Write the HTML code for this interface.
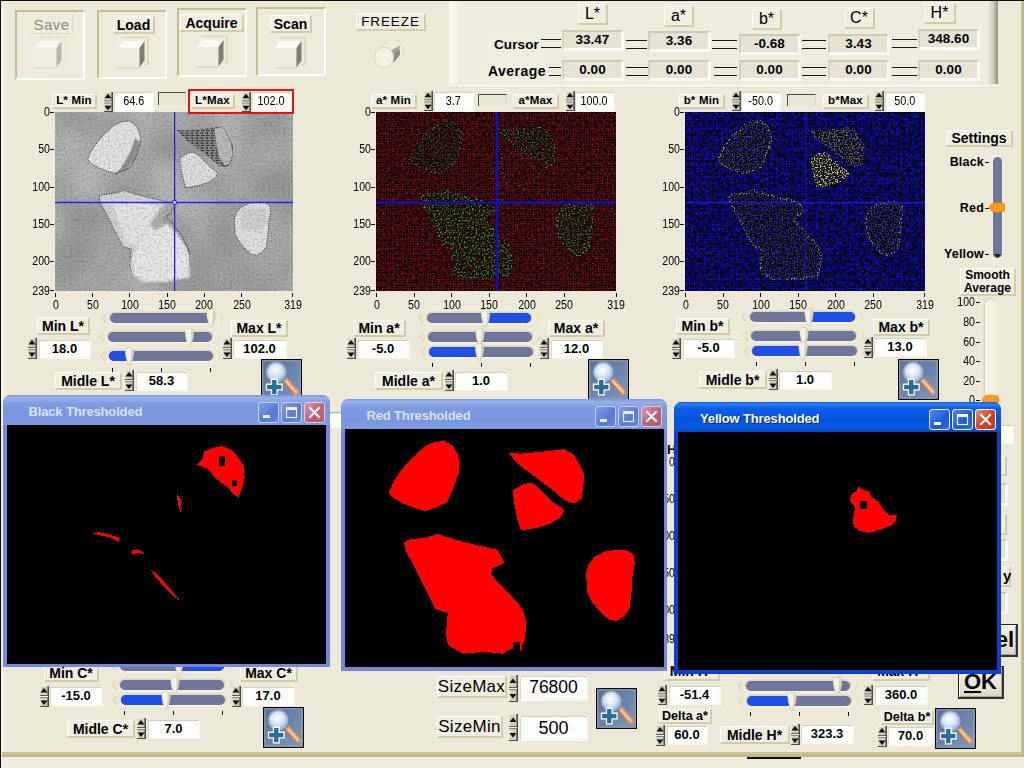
<!DOCTYPE html>
<html><head><meta charset="utf-8"><title>Threshold</title>
<style>
html,body{margin:0;padding:0;}
body{width:1024px;height:768px;overflow:hidden;background:#ECE9D8;font-family:"Liberation Sans",sans-serif;position:relative;color:#000;}
.abs{position:absolute;}
.lbl{position:absolute;box-sizing:border-box;background:#F0EEE0;border-top:1px solid #FCFBF4;border-left:1px solid #FCFBF4;border-bottom:2px solid #D3CCA8;border-right:2px solid #D3CCA8;display:flex;align-items:center;justify-content:center;white-space:nowrap;line-height:1;}
.fld{position:absolute;box-sizing:border-box;background:#FEFEFC;border-top:1px solid #D2CEB8;border-left:1px solid #DEDAC6;border-bottom:2px solid #FAF8EC;border-right:2px solid #FAF8EC;padding-bottom:1px;display:flex;align-items:center;justify-content:center;white-space:nowrap;line-height:1;}
.ind{position:absolute;box-sizing:border-box;background:#E6E3D5;border-top:2px solid #CFCAB2;border-left:2px solid #D6D2BC;border-bottom:3px solid #FCFBF3;border-right:3px solid #FCFBF3;display:flex;align-items:center;justify-content:center;white-space:nowrap;font-weight:bold;line-height:1;}
.spin{position:absolute;}
.frm{position:absolute;box-sizing:border-box;background:#EEEBDD;border-top:2px solid #C6BD91;border-left:2px solid #C6BD91;border-bottom:2px solid #FDFCF6;border-right:2px solid #FDFCF6;}
.ax{position:absolute;font-size:12px;line-height:12px;white-space:nowrap;color:#000;}
.tk{position:absolute;background:#111;}
.dl{position:absolute;height:1px;background:#1A1A1A;}
svg{display:block;}
</style></head><body>

<div class="abs" style="left:0;top:757px;width:1024px;height:11px;background:#EFECDE;"></div>
<div class="abs" style="left:1px;top:1px;width:5px;height:751px;background:#EFEDDF;"></div>
<div class="abs" style="left:2px;top:752px;width:1022px;height:5px;background:linear-gradient(to bottom,#CFC69C,#BFB482);"></div>
<div class="abs" style="left:1021px;top:1px;width:3px;height:756px;background:linear-gradient(to right,#CFC69C,#B9AE7C);"></div>
<div class="abs" style="left:0;top:0;width:1024px;height:1px;background:#111;"></div>
<div class="abs" style="left:0;top:0;width:1px;height:768px;background:#111;"></div>
<div class="abs" style="left:747px;top:757px;width:54px;height:2px;background:#111;"></div>
<div class="frm" style="left:15px;top:10px;width:70px;height:70px;"></div>
<div class="frm" style="left:97px;top:10px;width:70px;height:69px;"></div>
<div class="frm" style="left:177px;top:8px;width:70px;height:69px;"></div>
<div class="frm" style="left:256px;top:7px;width:70px;height:69px;"></div>
<div class="abs" style="left:31px;top:15px;width:42px;height:19px;box-sizing:border-box;border-bottom:1px dotted #CFC7A2;border-right:1px dotted #CFC7A2;display:flex;align-items:center;justify-content:center;font-size:15px;font-weight:normal;color:#8c8c86;letter-spacing:0.5px;line-height:1;">Save</div>
<div class="abs" style="left:34px;top:36px;width:34px;height:34px;"><svg width="34" height="34" viewBox="-1 -12 34 34"><path d="M5 -10.5 H30.5 V16" fill="none" stroke="#D9D4B8" stroke-width="1" stroke-dasharray="1 1"/><path d="M0 0 L5 -7 H26.5 L21.5 0 Z" fill="#F6F5EC"/><rect x="0" y="0" width="21.5" height="19.5" fill="#EFEDE0"/><path d="M21.5 0 L26.5 -7 V12.5 L21.5 19.5 Z" fill="#B9B7AA"/><path d="M0 19.8 H21.5" stroke="#CFCAB0" stroke-width="1" stroke-dasharray="1 1"/></svg></div>
<div class="lbl" style="left:113px;top:16px;width:42px;height:18px;font-size:14px;font-weight:bold;">Load</div>
<div class="abs" style="left:117px;top:36px;width:34px;height:34px;"><svg width="34" height="34" viewBox="-1 -12 34 34"><path d="M4.5 -10.5 H30 V16.5 H26" fill="none" stroke="#DDD8B8" stroke-width="1.6"/><path d="M0 0 L5 -7 H26.5 L21.5 0 Z" fill="#FBFAF3"/><rect x="0" y="0" width="21.5" height="19.5" fill="#EEECDD"/><path d="M21.5 0 L26.5 -7 V12.5 L21.5 19.5 Z" fill="#7E7D6F"/><path d="M0 20 H21.5" stroke="#D8D2B0" stroke-width="1.2"/></svg></div>
<div class="lbl" style="left:180px;top:14px;width:64px;height:18px;font-size:14px;font-weight:bold;">Acquire</div>
<div class="abs" style="left:196px;top:34.5px;width:34px;height:34px;"><svg width="34" height="34" viewBox="-1 -12 34 34"><path d="M4.5 -10.5 H30 V16.5 H26" fill="none" stroke="#DDD8B8" stroke-width="1.6"/><path d="M0 0 L5 -7 H26.5 L21.5 0 Z" fill="#FBFAF3"/><rect x="0" y="0" width="21.5" height="19.5" fill="#EEECDD"/><path d="M21.5 0 L26.5 -7 V12.5 L21.5 19.5 Z" fill="#7E7D6F"/><path d="M0 20 H21.5" stroke="#D8D2B0" stroke-width="1.2"/></svg></div>
<div class="lbl" style="left:270px;top:15px;width:42px;height:18px;font-size:14px;font-weight:bold;">Scan</div>
<div class="abs" style="left:274px;top:35.5px;width:34px;height:34px;"><svg width="34" height="34" viewBox="-1 -12 34 34"><path d="M4.5 -10.5 H30 V16.5 H26" fill="none" stroke="#DDD8B8" stroke-width="1.6"/><path d="M0 0 L5 -7 H26.5 L21.5 0 Z" fill="#FBFAF3"/><rect x="0" y="0" width="21.5" height="19.5" fill="#EEECDD"/><path d="M21.5 0 L26.5 -7 V12.5 L21.5 19.5 Z" fill="#7E7D6F"/><path d="M0 20 H21.5" stroke="#D8D2B0" stroke-width="1.2"/></svg></div>
<div class="lbl" style="left:356px;top:13px;width:70px;height:18px;font-size:13.5px;font-weight:normal;letter-spacing:0.9px;">FREEZE</div>
<div class="abs" style="left:370px;top:36px;width:40px;height:36px;"><svg width="40" height="36" viewBox="370 36 40 36"><ellipse cx="392.5" cy="50.5" rx="10.6" ry="11" fill="#F0EEE1" stroke="#DCD6B6" stroke-width="0.9"/><path d="M390.5 51 L399.5 45.5 L400 55 L393.5 62.5 Z" fill="#8E8D82"/><path d="M391 50 l8 -4 M391.5 52 l8 -5 M392 54 l8 -6" stroke="#d8d6ca" stroke-width="0.6"/><ellipse cx="384" cy="57.3" rx="9.6" ry="10.2" fill="#F2F0E3" stroke="#D6CFAC" stroke-width="0.9"/></svg></div>
<div class="abs" style="left:449px;top:1px;width:549px;height:87px;background:#EEECDD;"></div>
<div class="abs" style="left:449px;top:1px;width:11px;height:86px;background:linear-gradient(to right,#FBFAF2,#F6F4E8 60%,#EEECDD);"></div>
<div class="abs" style="left:987px;top:1px;width:11px;height:87px;background:linear-gradient(to right,#EEECDD,#D2CEBA 55%,#8F8C7A);"></div>
<div class="abs" style="left:449px;top:84px;width:549px;height:4px;background:linear-gradient(to bottom,#EEECDD,#F8F7EE 50%,#DAD6C4);"></div>
<div class="abs" style="left:460px;top:84px;width:530px;height:3px;background:linear-gradient(to bottom,#F1EFE2,#FAF9F1);"></div>
<div class="lbl" style="left:578px;top:4px;width:30px;height:21px;font-size:16px;font-weight:normal;">L*</div>
<div class="lbl" style="left:664px;top:6px;width:30px;height:21px;font-size:16px;font-weight:normal;">a*</div>
<div class="lbl" style="left:752px;top:9px;width:30px;height:21px;font-size:16px;font-weight:normal;">b*</div>
<div class="lbl" style="left:844px;top:8px;width:31px;height:21px;font-size:16px;font-weight:normal;">C*</div>
<div class="lbl" style="left:924px;top:3px;width:32px;height:21px;font-size:16px;font-weight:normal;">H*</div>
<div class="abs" style="left:488px;top:33px;width:52px;height:20px;background:#EFEDDF;"></div>
<div class="abs" style="left:494px;top:36.5px;font-size:13.5px;font-weight:bold;line-height:16px;letter-spacing:0.1px;">Cursor</div>
<div class="abs" style="left:486px;top:61px;width:62px;height:20px;background:#EFEDDF;"></div>
<div class="abs" style="left:488px;top:63px;font-size:14px;font-weight:bold;line-height:16px;letter-spacing:0.45px;">Average</div>
<div class="ind" style="left:562px;top:29.5px;width:62px;height:21px;font-size:13.5px;">33.47</div>
<div class="ind" style="left:562px;top:60px;width:62px;height:21px;font-size:13.5px;">0.00</div>
<div class="ind" style="left:648px;top:31px;width:63px;height:21px;font-size:13.5px;">3.36</div>
<div class="ind" style="left:648px;top:60px;width:63px;height:21px;font-size:13.5px;">0.00</div>
<div class="ind" style="left:739px;top:33.5px;width:62px;height:21px;font-size:13.5px;">-0.68</div>
<div class="ind" style="left:739px;top:60px;width:62px;height:21px;font-size:13.5px;">0.00</div>
<div class="ind" style="left:828px;top:33.5px;width:62px;height:21px;font-size:13.5px;">3.43</div>
<div class="ind" style="left:828px;top:60px;width:62px;height:21px;font-size:13.5px;">0.00</div>
<div class="ind" style="left:918px;top:28.5px;width:62px;height:21px;font-size:13.5px;">348.60</div>
<div class="ind" style="left:918px;top:60px;width:62px;height:21px;font-size:13.5px;">0.00</div>
<div class="dl" style="left:541px;top:39px;width:20px;"></div>
<div class="dl" style="left:541px;top:47px;width:20px;"></div>
<div class="dl" style="left:549px;top:67px;width:12px;"></div>
<div class="dl" style="left:549px;top:75px;width:12px;"></div>
<div class="dl" style="left:626px;top:40px;width:21px;"></div>
<div class="dl" style="left:626px;top:48px;width:21px;"></div>
<div class="dl" style="left:626px;top:67px;width:22px;"></div>
<div class="dl" style="left:626px;top:75px;width:22px;"></div>
<div class="dl" style="left:712px;top:40px;width:25px;"></div>
<div class="dl" style="left:712px;top:48px;width:25px;"></div>
<div class="dl" style="left:714px;top:67px;width:23px;"></div>
<div class="dl" style="left:714px;top:75px;width:23px;"></div>
<div class="dl" style="left:802px;top:40px;width:24px;"></div>
<div class="dl" style="left:802px;top:48px;width:24px;"></div>
<div class="dl" style="left:802px;top:67px;width:24px;"></div>
<div class="dl" style="left:802px;top:75px;width:24px;"></div>
<div class="dl" style="left:892px;top:39px;width:25px;"></div>
<div class="dl" style="left:892px;top:47px;width:25px;"></div>
<div class="dl" style="left:892px;top:67px;width:25px;"></div>
<div class="dl" style="left:892px;top:75px;width:25px;"></div>
<div class="abs" style="left:55px;top:112px;width:238px;height:179px;overflow:hidden;background:#ADADAD;"><svg width="238" height="179" viewBox="0 0 238 179"><defs>
<filter id="fL1" x="0" y="0" width="100%" height="100%" color-interpolation-filters="sRGB"><feTurbulence type="fractalNoise" baseFrequency="0.016" numOctaves="2" seed="7"/><feColorMatrix type="matrix" values="0 0 0 0 0.42  0 0 0 0 0.42  0 0 0 0 0.42  1.2 0 0 0 -0.42"/></filter>
<filter id="fL2" x="0" y="0" width="100%" height="100%" color-interpolation-filters="sRGB"><feTurbulence type="fractalNoise" baseFrequency="0.45" numOctaves="1" seed="11"/><feColorMatrix type="matrix" values="0 0 0 0 0.2  0 0 0 0 0.2  0 0 0 0 0.2  1.6 0 0 0 -0.66"/></filter>
<filter id="fL3" x="-5%" y="-5%" width="110%" height="110%"><feGaussianBlur stdDeviation="1.2"/></filter>
<pattern id="gridL" width="2.5" height="2.5" patternUnits="userSpaceOnUse"><path d="M0 0.5 H2.5 M0.5 0 V2.5" stroke="#fff" stroke-opacity="0.10" stroke-width="1"/></pattern>
<pattern id="hatchL" width="5" height="5" patternUnits="userSpaceOnUse"><path d="M0 1 H3 M1 3.5 H4.5 M2.5 0 V2" stroke="#111" stroke-opacity="0.8" stroke-width="1.1"/></pattern>
<linearGradient id="gL" x1="0" y1="0" x2="0.6" y2="1"><stop offset="0" stop-color="#B5B5B5"/><stop offset="0.5" stop-color="#B0B0B0"/><stop offset="1" stop-color="#A6A6A6"/></linearGradient>
</defs><rect width="238" height="179" fill="url(#gL)"/><rect width="238" height="179" filter="url(#fL1)"/><g filter="url(#fL3)"><polygon points="30,175 60,130 95,95 120,100 150,135 160,179 110,179 80,150 50,179" fill="#8F8F8F" opacity="0.35"/><polygon points="150,120 238,110 238,179 170,179" fill="#909090" opacity="0.22"/></g><polygon points="77.4,22.4 86.3,29.8 81.1,46.2 75.1,56.7 61.0,62.6 58.0,59.7" fill="#6E6E6E" opacity="0.9"/><polygon points="32.6,47.5 36.6,38.6 42.0,30.5 50.1,21.6 59.5,13.0 66.7,9.7 74.3,8.9 80.2,13.0 83.7,18.4 85.3,25.1 84.5,33.2 80.2,44.8 75.6,54.8 66.7,58.8 59.5,61.3 51.4,58.8 43.3,55.6 36.1,51.5" fill="#E1E1E1" stroke="#262626" stroke-width="1" stroke-dasharray="1.3 1.2" stroke-opacity="0.9"/><polygon points="80.3,25.4 84.8,31.3 79.6,45.5 74.4,54.4 62.5,60.4 68.4,52.2 75.9,38.8" fill="#7A7A7A" opacity="0.85"/><polygon points="121.4,17.8 130.8,18.4 142.9,17.3 153.7,16.2 163.1,15.1 169.8,18.9 173.9,25.9 178.2,34.0 177.1,42.6 176.0,52.1 169.8,55.6 163.1,52.9 155.0,45.9 142.9,36.7 130.8,27.8" fill="#828282"/><polygon points="121.4,17.8 130.8,18.4 142.9,17.3 153.7,16.2 163.1,15.1 169.8,18.9 173.9,25.9 178.2,34.0 177.1,42.6 176.0,52.1 169.8,55.6 163.1,52.9 155.0,45.9 142.9,36.7 130.8,27.8" fill="url(#hatchL)"/><polygon points="159.2,16.4 168.1,14.9 176.3,31.3 177.8,41.8 174.8,52.2 169.6,53.7 163.6,44.8 160.7,29.8" fill="#B4B4B4" stroke="#333" stroke-width="0.8" stroke-dasharray="1.2 1.4"/><polygon points="124.9,45.9 132.1,41.6 137.5,39.9 142.9,42.6 148.3,48.0 155.0,54.8 163.1,60.5 160.4,65.6 153.7,70.2 142.9,73.7 130.8,75.6 128.1,66.9 125.9,56.1" fill="#DADADA" stroke="#262626" stroke-width="1" stroke-dasharray="1.3 1.2" stroke-opacity="0.9"/><polygon points="179.2,107.4 181.4,100.7 186.0,95.3 194.0,91.2 202.1,90.1 210.2,90.7 214.8,93.9 215.6,100.7 213.7,110.1 213.1,120.9 211.5,134.4 207.5,139.8 202.1,143.0 196.7,142.5 190.5,137.1 184.6,130.3 180.3,122.3" fill="#DDDDDD" stroke="#262626" stroke-width="1" stroke-dasharray="1.3 1.2" stroke-opacity="0.9"/><polygon points="184.5,100.7 194.9,95.5 209.7,97.0 213.5,111.9 200.8,119.3 187.4,117.8" fill="#C6C6C6" opacity="0.7" filter="url(#fL3)"/><polygon points="44.1,84.5 47.4,82.6 60.8,81.0 68.9,78.3 77.0,81.0 89.1,84.5 103.9,88.0 113.3,90.1 118.7,99.9 109.3,104.2 108.7,108.8 114.6,115.5 124.1,125.0 132.1,134.4 134.8,143.8 134.0,154.6 130.8,165.4 122.7,164.1 117.3,167.6 103.9,166.2 87.7,167.6 77.0,161.4 74.8,153.3 76.4,137.1 67.5,134.4 63.5,126.3 56.8,112.8 50.1,99.3 45.2,91.2" fill="#CFCFCF" stroke="#262626" stroke-width="1" stroke-dasharray="1.3 1.2" stroke-opacity="0.9"/><polygon points="58.0,91.0 87.8,89.5 104.1,95.5 95.2,111.9 80.3,132.8 72.9,131.3 64.0,111.9" fill="#E4E4E4" filter="url(#fL3)"/><polygon points="83.3,131.3 95.2,113.4 111.6,110.4 125.0,125.3 133.9,145.4 134.6,165.6 125.0,167.1 111.6,170.1 87.8,170.1 77.4,162.6 78.8,143.2" fill="#E6E6E6" filter="url(#fL3)"/><polygon points="95.2,111.9 111.6,89.5 120.5,95.5 113.0,104.4 111.6,111.9 100.4,119.3" fill="#9A9A9A" opacity="0.75" filter="url(#fL3)"/><polyline points="119.0,95.5 111.6,104.4 119.0,113.4 127.9,125.3 135.4,141.7" fill="none" stroke="#262626" stroke-width="1" stroke-dasharray="1.3 1.2"/><rect width="238" height="179" filter="url(#fL2)" opacity="0.35"/><rect width="238" height="179" fill="url(#gridL)"/><rect x="119" y="0" width="1.3" height="179" fill="#1E22F0"/><rect x="0" y="89.8" width="238" height="1.4" fill="#1E22F0"/><circle cx="119.6" cy="90.5" r="2.3" fill="#B8B8D8" stroke="#1E22F0" stroke-width="1"/></svg></div>
<div class="ax" style="left:10px;top:106.0px;width:40px;text-align:right;transform:scaleX(0.88);transform-origin:right center;">0</div>
<div class="tk" style="left:50px;top:112px;width:4px;height:1px;"></div>
<div class="ax" style="left:10px;top:143.3px;width:40px;text-align:right;transform:scaleX(0.88);transform-origin:right center;">50</div>
<div class="tk" style="left:50px;top:149px;width:4px;height:1px;"></div>
<div class="ax" style="left:10px;top:180.7px;width:40px;text-align:right;transform:scaleX(0.88);transform-origin:right center;">100</div>
<div class="tk" style="left:50px;top:187px;width:4px;height:1px;"></div>
<div class="ax" style="left:10px;top:218.0px;width:40px;text-align:right;transform:scaleX(0.88);transform-origin:right center;">150</div>
<div class="tk" style="left:50px;top:224px;width:4px;height:1px;"></div>
<div class="ax" style="left:10px;top:255.4px;width:40px;text-align:right;transform:scaleX(0.88);transform-origin:right center;">200</div>
<div class="tk" style="left:50px;top:261px;width:4px;height:1px;"></div>
<div class="ax" style="left:10px;top:284.5px;width:40px;text-align:right;transform:scaleX(0.88);transform-origin:right center;">239</div>
<div class="tk" style="left:50px;top:290px;width:4px;height:1px;"></div>
<div class="ax" style="left:35.5px;top:299px;width:40px;text-align:center;transform:scaleX(0.88);">0</div>
<div class="tk" style="left:55px;top:293px;width:1px;height:4px;"></div>
<div class="ax" style="left:72.7px;top:299px;width:40px;text-align:center;transform:scaleX(0.88);">50</div>
<div class="tk" style="left:92px;top:293px;width:1px;height:4px;"></div>
<div class="ax" style="left:110.0px;top:299px;width:40px;text-align:center;transform:scaleX(0.88);">100</div>
<div class="tk" style="left:129px;top:293px;width:1px;height:4px;"></div>
<div class="ax" style="left:147.2px;top:299px;width:40px;text-align:center;transform:scaleX(0.88);">150</div>
<div class="tk" style="left:167px;top:293px;width:1px;height:4px;"></div>
<div class="ax" style="left:184.4px;top:299px;width:40px;text-align:center;transform:scaleX(0.88);">200</div>
<div class="tk" style="left:204px;top:293px;width:1px;height:4px;"></div>
<div class="ax" style="left:221.6px;top:299px;width:40px;text-align:center;transform:scaleX(0.88);">250</div>
<div class="tk" style="left:241px;top:293px;width:1px;height:4px;"></div>
<div class="ax" style="left:273.0px;top:299px;width:40px;text-align:center;transform:scaleX(0.88);">319</div>
<div class="tk" style="left:292px;top:293px;width:1px;height:4px;"></div>
<div class="abs" style="left:376px;top:112px;width:240px;height:179px;overflow:hidden;background:#4A0A0C;"><svg width="240" height="179" viewBox="0 0 240 179"><defs>
<filter id="fA1" x="0" y="0" width="100%" height="100%" color-interpolation-filters="sRGB"><feTurbulence type="fractalNoise" baseFrequency="0.4" numOctaves="2" seed="5"/><feColorMatrix type="matrix" values="1.7 0 0 0 -0.53  0 0 0 0 0.035  0 0 0 0 0.05  0 0 0 0 1"/></filter>
<filter id="fA2" x="0" y="0" width="100%" height="100%" color-interpolation-filters="sRGB"><feTurbulence type="fractalNoise" baseFrequency="0.6" numOctaves="1" seed="21" result="n"/><feColorMatrix in="n" type="matrix" values="0 0 0 0 0.12  0 0 0 0 0.78  0 0 0 0 0.14  0 6 0 0 -3.1" result="g"/><feComposite in="g" in2="SourceAlpha" operator="in"/></filter>
<filter id="fA3" x="0" y="0" width="100%" height="100%" color-interpolation-filters="sRGB"><feGaussianBlur stdDeviation="2.5"/></filter>
<pattern id="gridA" width="5" height="5" patternUnits="userSpaceOnUse"><path d="M0 0.5 H5 M0 3.5 H5 M0.5 0 V5 M3.5 0 V5" stroke="#000" stroke-opacity="0.55" stroke-width="1" shape-rendering="crispEdges"/></pattern>
</defs><rect width="240" height="179" filter="url(#fA1)"/><g filter="url(#fA3)" opacity="0.4"><polygon points="32.8,47.5 36.9,38.6 42.3,30.5 50.5,21.6 60.0,13.0 67.3,9.7 74.9,8.9 80.9,13.0 84.4,18.4 86.0,25.1 85.2,33.2 80.9,44.8 76.3,54.8 67.3,58.8 60.0,61.3 51.8,58.8 43.7,55.6 36.4,51.5" fill="#0c0703"/><polygon points="122.4,17.8 131.9,18.4 144.1,17.3 155.0,16.2 164.5,15.1 171.2,18.9 175.3,25.9 179.7,34.0 178.6,42.6 177.5,52.1 171.2,55.6 164.5,52.9 156.3,45.9 144.1,36.7 131.9,27.8" fill="#0c0703"/><polygon points="180.7,107.4 182.9,100.7 187.5,95.3 195.7,91.2 203.8,90.1 211.9,90.7 216.6,93.9 217.4,100.7 215.5,110.1 214.9,120.9 213.3,134.4 209.2,139.8 203.8,143.0 198.4,142.5 192.1,137.1 186.2,130.3 181.8,122.3" fill="#0c0703"/><polygon points="44.5,84.5 47.8,82.6 61.3,81.0 69.5,78.3 77.6,81.0 89.8,84.5 104.8,88.0 114.3,90.1 119.7,99.9 110.2,104.2 109.6,108.8 115.6,115.5 125.1,125.0 133.2,134.4 136.0,143.8 135.1,154.6 131.9,165.4 123.8,164.1 118.3,167.6 104.8,166.2 88.5,167.6 77.6,161.4 75.4,153.3 77.1,137.1 68.1,134.4 64.0,126.3 57.3,112.8 50.5,99.3 45.6,91.2" fill="#0c0703"/></g><rect width="240" height="179" fill="url(#gridA)"/><g filter="url(#fA2)"><polygon points="32.8,47.5 36.9,38.6 42.3,30.5 50.5,21.6 60.0,13.0 67.3,9.7 74.9,8.9 80.9,13.0 84.4,18.4 86.0,25.1 85.2,33.2 80.9,44.8 76.3,54.8 67.3,58.8 60.0,61.3 51.8,58.8 43.7,55.6 36.4,51.5" fill="#fff" fill-opacity="0.4" stroke="#fff" stroke-width="2.5" stroke-opacity="0.6"/><polygon points="122.4,17.8 131.9,18.4 144.1,17.3 155.0,16.2 164.5,15.1 171.2,18.9 175.3,25.9 179.7,34.0 178.6,42.6 177.5,52.1 171.2,55.6 164.5,52.9 156.3,45.9 144.1,36.7 131.9,27.8" fill="#fff" fill-opacity="0.5" stroke="#fff" stroke-width="2" stroke-opacity="0.6"/><polygon points="180.7,107.4 182.9,100.7 187.5,95.3 195.7,91.2 203.8,90.1 211.9,90.7 216.6,93.9 217.4,100.7 215.5,110.1 214.9,120.9 213.3,134.4 209.2,139.8 203.8,143.0 198.4,142.5 192.1,137.1 186.2,130.3 181.8,122.3" fill="#fff" fill-opacity="0.6" stroke="#fff" stroke-width="2.5" stroke-opacity="0.8"/><polygon points="44.5,84.5 47.8,82.6 61.3,81.0 69.5,78.3 77.6,81.0 89.8,84.5 104.8,88.0 114.3,90.1 119.7,99.9 110.2,104.2 109.6,108.8 115.6,115.5 125.1,125.0 133.2,134.4 136.0,143.8 135.1,154.6 131.9,165.4 123.8,164.1 118.3,167.6 104.8,166.2 88.5,167.6 77.6,161.4 75.4,153.3 77.1,137.1 68.1,134.4 64.0,126.3 57.3,112.8 50.5,99.3 45.6,91.2" fill="#fff" fill-opacity="0.72" stroke="#fff" stroke-width="2" stroke-opacity="0.7"/><polygon points="125.9,45.9 133.2,41.6 138.7,39.9 144.1,42.6 149.5,48.0 156.3,54.8 164.5,60.5 161.7,65.6 155.0,70.2 144.1,73.7 131.9,75.6 129.2,66.9 127.0,56.1" fill="none" stroke="#fff" stroke-width="2" opacity="0.5"/></g><rect x="119.8" y="0" width="2.4" height="179" fill="#0C10C4"/><rect x="0" y="89.4" width="240" height="2.2" fill="#0C10C4"/></svg></div>
<div class="ax" style="left:331px;top:106.0px;width:40px;text-align:right;transform:scaleX(0.88);transform-origin:right center;">0</div>
<div class="tk" style="left:371px;top:112px;width:4px;height:1px;"></div>
<div class="ax" style="left:331px;top:143.3px;width:40px;text-align:right;transform:scaleX(0.88);transform-origin:right center;">50</div>
<div class="tk" style="left:371px;top:149px;width:4px;height:1px;"></div>
<div class="ax" style="left:331px;top:180.7px;width:40px;text-align:right;transform:scaleX(0.88);transform-origin:right center;">100</div>
<div class="tk" style="left:371px;top:187px;width:4px;height:1px;"></div>
<div class="ax" style="left:331px;top:218.0px;width:40px;text-align:right;transform:scaleX(0.88);transform-origin:right center;">150</div>
<div class="tk" style="left:371px;top:224px;width:4px;height:1px;"></div>
<div class="ax" style="left:331px;top:255.4px;width:40px;text-align:right;transform:scaleX(0.88);transform-origin:right center;">200</div>
<div class="tk" style="left:371px;top:261px;width:4px;height:1px;"></div>
<div class="ax" style="left:331px;top:284.5px;width:40px;text-align:right;transform:scaleX(0.88);transform-origin:right center;">239</div>
<div class="tk" style="left:371px;top:290px;width:4px;height:1px;"></div>
<div class="ax" style="left:356.5px;top:299px;width:40px;text-align:center;transform:scaleX(0.88);">0</div>
<div class="tk" style="left:376px;top:293px;width:1px;height:4px;"></div>
<div class="ax" style="left:394.0px;top:299px;width:40px;text-align:center;transform:scaleX(0.88);">50</div>
<div class="tk" style="left:414px;top:293px;width:1px;height:4px;"></div>
<div class="ax" style="left:431.6px;top:299px;width:40px;text-align:center;transform:scaleX(0.88);">100</div>
<div class="tk" style="left:451px;top:293px;width:1px;height:4px;"></div>
<div class="ax" style="left:469.1px;top:299px;width:40px;text-align:center;transform:scaleX(0.88);">150</div>
<div class="tk" style="left:489px;top:293px;width:1px;height:4px;"></div>
<div class="ax" style="left:506.7px;top:299px;width:40px;text-align:center;transform:scaleX(0.88);">200</div>
<div class="tk" style="left:526px;top:293px;width:1px;height:4px;"></div>
<div class="ax" style="left:544.2px;top:299px;width:40px;text-align:center;transform:scaleX(0.88);">250</div>
<div class="tk" style="left:564px;top:293px;width:1px;height:4px;"></div>
<div class="ax" style="left:596.0px;top:299px;width:40px;text-align:center;transform:scaleX(0.88);">319</div>
<div class="tk" style="left:616px;top:293px;width:1px;height:4px;"></div>
<div class="abs" style="left:685px;top:112px;width:240px;height:179px;overflow:hidden;background:#0A0A5A;"><svg width="240" height="179" viewBox="0 0 240 179"><defs>
<filter id="fB1" x="0" y="0" width="100%" height="100%" color-interpolation-filters="sRGB"><feTurbulence type="fractalNoise" baseFrequency="0.33" numOctaves="2" seed="9"/><feColorMatrix type="matrix" values="0 0 0 0 0.045  0 0 0 0 0.045  0 0 2.8 0 -0.9  0 0 0 0 1"/></filter>
<filter id="fB2" x="0" y="0" width="100%" height="100%" color-interpolation-filters="sRGB"><feTurbulence type="fractalNoise" baseFrequency="0.65" numOctaves="1" seed="33" result="n"/><feColorMatrix in="n" type="matrix" values="0 0 0 0 0.85  0 0 0 0 0.85  0 0 0 0 0.08  0 6 0 0 -2.9" result="g"/><feComposite in="g" in2="SourceAlpha" operator="in"/></filter>
<filter id="fB3" x="0" y="0" width="100%" height="100%" color-interpolation-filters="sRGB"><feGaussianBlur stdDeviation="2.5"/></filter>
<pattern id="gridB" width="5" height="5" patternUnits="userSpaceOnUse"><path d="M0 0.5 H5 M0 3.5 H5 M0.5 0 V5 M3.5 0 V5" stroke="#000" stroke-opacity="0.55" stroke-width="1" shape-rendering="crispEdges"/></pattern>
</defs><rect width="240" height="179" filter="url(#fB1)"/><g filter="url(#fB3)" opacity="0.3"><polygon points="32.8,47.5 36.9,38.6 42.3,30.5 50.5,21.6 60.0,13.0 67.3,9.7 74.9,8.9 80.9,13.0 84.4,18.4 86.0,25.1 85.2,33.2 80.9,44.8 76.3,54.8 67.3,58.8 60.0,61.3 51.8,58.8 43.7,55.6 36.4,51.5" fill="#06060a"/><polygon points="122.4,17.8 131.9,18.4 144.1,17.3 155.0,16.2 164.5,15.1 171.2,18.9 175.3,25.9 179.7,34.0 178.6,42.6 177.5,52.1 171.2,55.6 164.5,52.9 156.3,45.9 144.1,36.7 131.9,27.8" fill="#06060a"/><polygon points="125.9,45.9 133.2,41.6 138.7,39.9 144.1,42.6 149.5,48.0 156.3,54.8 164.5,60.5 161.7,65.6 155.0,70.2 144.1,73.7 131.9,75.6 129.2,66.9 127.0,56.1" fill="#06060a"/><polygon points="180.7,107.4 182.9,100.7 187.5,95.3 195.7,91.2 203.8,90.1 211.9,90.7 216.6,93.9 217.4,100.7 215.5,110.1 214.9,120.9 213.3,134.4 209.2,139.8 203.8,143.0 198.4,142.5 192.1,137.1 186.2,130.3 181.8,122.3" fill="#06060a"/><polygon points="44.5,84.5 47.8,82.6 61.3,81.0 69.5,78.3 77.6,81.0 89.8,84.5 104.8,88.0 114.3,90.1 119.7,99.9 110.2,104.2 109.6,108.8 115.6,115.5 125.1,125.0 133.2,134.4 136.0,143.8 135.1,154.6 131.9,165.4 123.8,164.1 118.3,167.6 104.8,166.2 88.5,167.6 77.6,161.4 75.4,153.3 77.1,137.1 68.1,134.4 64.0,126.3 57.3,112.8 50.5,99.3 45.6,91.2" fill="#06060a"/></g><rect width="240" height="179" fill="url(#gridB)"/><g filter="url(#fB2)"><polygon points="32.8,47.5 36.9,38.6 42.3,30.5 50.5,21.6 60.0,13.0 67.3,9.7 74.9,8.9 80.9,13.0 84.4,18.4 86.0,25.1 85.2,33.2 80.9,44.8 76.3,54.8 67.3,58.8 60.0,61.3 51.8,58.8 43.7,55.6 36.4,51.5" fill="#fff" fill-opacity="0.28" stroke="#fff" stroke-width="2.5" stroke-opacity="0.6"/><polygon points="122.4,17.8 131.9,18.4 144.1,17.3 155.0,16.2 164.5,15.1 171.2,18.9 175.3,25.9 179.7,34.0 178.6,42.6 177.5,52.1 171.2,55.6 164.5,52.9 156.3,45.9 144.1,36.7 131.9,27.8" fill="#fff" fill-opacity="0.5"/><polygon points="125.9,45.9 133.2,41.6 138.7,39.9 144.1,42.6 149.5,48.0 156.3,54.8 164.5,60.5 161.7,65.6 155.0,70.2 144.1,73.7 131.9,75.6 129.2,66.9 127.0,56.1" fill="#fff" opacity="1"/><polygon points="125.9,45.9 133.2,41.6 138.7,39.9 144.1,42.6 149.5,48.0 156.3,54.8 164.5,60.5 161.7,65.6 155.0,70.2 144.1,73.7 131.9,75.6 129.2,66.9 127.0,56.1" fill="#fff" opacity="1"/><polygon points="180.7,107.4 182.9,100.7 187.5,95.3 195.7,91.2 203.8,90.1 211.9,90.7 216.6,93.9 217.4,100.7 215.5,110.1 214.9,120.9 213.3,134.4 209.2,139.8 203.8,143.0 198.4,142.5 192.1,137.1 186.2,130.3 181.8,122.3" fill="#fff" fill-opacity="0.25" stroke="#fff" stroke-width="2.5" stroke-opacity="0.55"/><polygon points="44.5,84.5 47.8,82.6 61.3,81.0 69.5,78.3 77.6,81.0 89.8,84.5 104.8,88.0 114.3,90.1 119.7,99.9 110.2,104.2 109.6,108.8 115.6,115.5 125.1,125.0 133.2,134.4 136.0,143.8 135.1,154.6 131.9,165.4 123.8,164.1 118.3,167.6 104.8,166.2 88.5,167.6 77.6,161.4 75.4,153.3 77.1,137.1 68.1,134.4 64.0,126.3 57.3,112.8 50.5,99.3 45.6,91.2" fill="#fff" fill-opacity="0.22" stroke="#fff" stroke-width="2.5" stroke-opacity="0.55"/></g><rect x="120" y="0" width="1" height="179" fill="#1A1AC8" opacity="0.6"/><rect x="0" y="90" width="240" height="1.4" fill="#1C1CE0" opacity="0.8"/></svg></div>
<div class="ax" style="left:640px;top:106.0px;width:40px;text-align:right;transform:scaleX(0.88);transform-origin:right center;">0</div>
<div class="tk" style="left:680px;top:112px;width:4px;height:1px;"></div>
<div class="ax" style="left:640px;top:143.3px;width:40px;text-align:right;transform:scaleX(0.88);transform-origin:right center;">50</div>
<div class="tk" style="left:680px;top:149px;width:4px;height:1px;"></div>
<div class="ax" style="left:640px;top:180.7px;width:40px;text-align:right;transform:scaleX(0.88);transform-origin:right center;">100</div>
<div class="tk" style="left:680px;top:187px;width:4px;height:1px;"></div>
<div class="ax" style="left:640px;top:218.0px;width:40px;text-align:right;transform:scaleX(0.88);transform-origin:right center;">150</div>
<div class="tk" style="left:680px;top:224px;width:4px;height:1px;"></div>
<div class="ax" style="left:640px;top:255.4px;width:40px;text-align:right;transform:scaleX(0.88);transform-origin:right center;">200</div>
<div class="tk" style="left:680px;top:261px;width:4px;height:1px;"></div>
<div class="ax" style="left:640px;top:284.5px;width:40px;text-align:right;transform:scaleX(0.88);transform-origin:right center;">239</div>
<div class="tk" style="left:680px;top:290px;width:4px;height:1px;"></div>
<div class="ax" style="left:665.5px;top:299px;width:40px;text-align:center;transform:scaleX(0.88);">0</div>
<div class="tk" style="left:685px;top:293px;width:1px;height:4px;"></div>
<div class="ax" style="left:703.0px;top:299px;width:40px;text-align:center;transform:scaleX(0.88);">50</div>
<div class="tk" style="left:723px;top:293px;width:1px;height:4px;"></div>
<div class="ax" style="left:740.6px;top:299px;width:40px;text-align:center;transform:scaleX(0.88);">100</div>
<div class="tk" style="left:760px;top:293px;width:1px;height:4px;"></div>
<div class="ax" style="left:778.1px;top:299px;width:40px;text-align:center;transform:scaleX(0.88);">150</div>
<div class="tk" style="left:798px;top:293px;width:1px;height:4px;"></div>
<div class="ax" style="left:815.7px;top:299px;width:40px;text-align:center;transform:scaleX(0.88);">200</div>
<div class="tk" style="left:835px;top:293px;width:1px;height:4px;"></div>
<div class="ax" style="left:853.2px;top:299px;width:40px;text-align:center;transform:scaleX(0.88);">250</div>
<div class="tk" style="left:873px;top:293px;width:1px;height:4px;"></div>
<div class="ax" style="left:905.0px;top:299px;width:40px;text-align:center;transform:scaleX(0.88);">319</div>
<div class="tk" style="left:924px;top:293px;width:1px;height:4px;"></div>
<div class="lbl" style="left:52px;top:94px;width:45px;height:15px;font-size:11.5px;font-weight:bold;letter-spacing:0.2px;">L* Min</div>
<div class="spin" style="left:104px;top:92px;width:9px;height:20px;"><svg width="9" height="20" viewBox="0 0 9 20"><rect x="0" y="0" width="9" height="20" fill="#D3CFBD"/><rect x="0" y="0" width="9" height="1" fill="#E9E6D6"/><rect x="0" y="0" width="1" height="20" fill="#E9E6D6"/><rect x="7.4" y="0" width="1.6" height="20" fill="#4E4E44"/><rect x="0" y="19" width="9" height="1" fill="#4E4E44"/><rect x="0" y="8.5" width="8" height="1" fill="#5E5E52"/><rect x="0" y="9.5" width="8" height="1" fill="#F0EEE0"/><rect x="0" y="10.5" width="8" height="1" fill="#8A8878"/><path d="M4.0 1.7999999999999998 L7.6 6.2 L0.3999999999999999 6.2 Z" fill="#111"/><path d="M4.0 18.2 L7.6 13.8 L0.3999999999999999 13.8 Z" fill="#111"/></svg></div>
<div class="fld" style="left:114px;top:92px;width:40px;height:20px;font-size:12px;font-weight:normal;"><span style="display:inline-block;transform:scaleX(0.9);">64.6</span></div>
<div class="abs" style="left:158px;top:92px;width:28px;height:13px;box-sizing:border-box;background:#E9E6D6;border-top:1px solid #4A4A40;border-left:1px solid #4A4A40;border-right:1px solid #D9D5BF;"></div>
<div class="abs" style="left:188px;top:89px;width:106px;height:25px;box-sizing:border-box;border:2px solid #D81818;"></div>
<div class="lbl" style="left:191px;top:94px;width:44px;height:15px;font-size:11.5px;font-weight:bold;letter-spacing:0.2px;">L*Max</div>
<div class="spin" style="left:242px;top:92px;width:9px;height:20px;"><svg width="9" height="20" viewBox="0 0 9 20"><rect x="0" y="0" width="9" height="20" fill="#D3CFBD"/><rect x="0" y="0" width="9" height="1" fill="#E9E6D6"/><rect x="0" y="0" width="1" height="20" fill="#E9E6D6"/><rect x="7.4" y="0" width="1.6" height="20" fill="#4E4E44"/><rect x="0" y="19" width="9" height="1" fill="#4E4E44"/><rect x="0" y="8.5" width="8" height="1" fill="#5E5E52"/><rect x="0" y="9.5" width="8" height="1" fill="#F0EEE0"/><rect x="0" y="10.5" width="8" height="1" fill="#8A8878"/><path d="M4.0 1.7999999999999998 L7.6 6.2 L0.3999999999999999 6.2 Z" fill="#111"/><path d="M4.0 18.2 L7.6 13.8 L0.3999999999999999 13.8 Z" fill="#111"/></svg></div>
<div class="fld" style="left:252px;top:92px;width:40px;height:20px;font-size:12px;font-weight:normal;"><span style="display:inline-block;transform:scaleX(0.9);">102.0</span></div>
<div class="lbl" style="left:371px;top:94px;width:46px;height:15px;font-size:11.5px;font-weight:bold;letter-spacing:0.2px;">a* Min</div>
<div class="spin" style="left:424px;top:91px;width:9px;height:20px;"><svg width="9" height="20" viewBox="0 0 9 20"><rect x="0" y="0" width="9" height="20" fill="#D3CFBD"/><rect x="0" y="0" width="9" height="1" fill="#E9E6D6"/><rect x="0" y="0" width="1" height="20" fill="#E9E6D6"/><rect x="7.4" y="0" width="1.6" height="20" fill="#4E4E44"/><rect x="0" y="19" width="9" height="1" fill="#4E4E44"/><rect x="0" y="8.5" width="8" height="1" fill="#5E5E52"/><rect x="0" y="9.5" width="8" height="1" fill="#F0EEE0"/><rect x="0" y="10.5" width="8" height="1" fill="#8A8878"/><path d="M4.0 1.7999999999999998 L7.6 6.2 L0.3999999999999999 6.2 Z" fill="#111"/><path d="M4.0 18.2 L7.6 13.8 L0.3999999999999999 13.8 Z" fill="#111"/></svg></div>
<div class="fld" style="left:434px;top:92px;width:40px;height:20px;font-size:12px;font-weight:normal;"><span style="display:inline-block;transform:scaleX(0.9);">3.7</span></div>
<div class="abs" style="left:478px;top:94px;width:29px;height:12px;box-sizing:border-box;background:#E9E6D6;border-top:1px solid #4A4A40;border-left:1px solid #4A4A40;border-right:1px solid #D9D5BF;"></div>
<div class="lbl" style="left:513px;top:94px;width:46px;height:15px;font-size:11.5px;font-weight:bold;letter-spacing:0.2px;">a*Max</div>
<div class="spin" style="left:566px;top:91px;width:9px;height:20px;"><svg width="9" height="20" viewBox="0 0 9 20"><rect x="0" y="0" width="9" height="20" fill="#D3CFBD"/><rect x="0" y="0" width="9" height="1" fill="#E9E6D6"/><rect x="0" y="0" width="1" height="20" fill="#E9E6D6"/><rect x="7.4" y="0" width="1.6" height="20" fill="#4E4E44"/><rect x="0" y="19" width="9" height="1" fill="#4E4E44"/><rect x="0" y="8.5" width="8" height="1" fill="#5E5E52"/><rect x="0" y="9.5" width="8" height="1" fill="#F0EEE0"/><rect x="0" y="10.5" width="8" height="1" fill="#8A8878"/><path d="M4.0 1.7999999999999998 L7.6 6.2 L0.3999999999999999 6.2 Z" fill="#111"/><path d="M4.0 18.2 L7.6 13.8 L0.3999999999999999 13.8 Z" fill="#111"/></svg></div>
<div class="fld" style="left:575px;top:92px;width:40px;height:20px;font-size:12px;font-weight:normal;"><span style="display:inline-block;transform:scaleX(0.9);">100.0</span></div>
<div class="lbl" style="left:679px;top:94px;width:46px;height:15px;font-size:11.5px;font-weight:bold;letter-spacing:0.2px;">b* Min</div>
<div class="spin" style="left:732px;top:91px;width:9px;height:20px;"><svg width="9" height="20" viewBox="0 0 9 20"><rect x="0" y="0" width="9" height="20" fill="#D3CFBD"/><rect x="0" y="0" width="9" height="1" fill="#E9E6D6"/><rect x="0" y="0" width="1" height="20" fill="#E9E6D6"/><rect x="7.4" y="0" width="1.6" height="20" fill="#4E4E44"/><rect x="0" y="19" width="9" height="1" fill="#4E4E44"/><rect x="0" y="8.5" width="8" height="1" fill="#5E5E52"/><rect x="0" y="9.5" width="8" height="1" fill="#F0EEE0"/><rect x="0" y="10.5" width="8" height="1" fill="#8A8878"/><path d="M4.0 1.7999999999999998 L7.6 6.2 L0.3999999999999999 6.2 Z" fill="#111"/><path d="M4.0 18.2 L7.6 13.8 L0.3999999999999999 13.8 Z" fill="#111"/></svg></div>
<div class="fld" style="left:741px;top:92px;width:40px;height:20px;font-size:12px;font-weight:normal;"><span style="display:inline-block;transform:scaleX(0.9);">-50.0</span></div>
<div class="abs" style="left:787px;top:94px;width:29px;height:12px;box-sizing:border-box;background:#E9E6D6;border-top:1px solid #4A4A40;border-left:1px solid #4A4A40;border-right:1px solid #D9D5BF;"></div>
<div class="lbl" style="left:823px;top:94px;width:46px;height:15px;font-size:11.5px;font-weight:bold;letter-spacing:0.2px;">b*Max</div>
<div class="spin" style="left:875px;top:91px;width:9px;height:20px;"><svg width="9" height="20" viewBox="0 0 9 20"><rect x="0" y="0" width="9" height="20" fill="#D3CFBD"/><rect x="0" y="0" width="9" height="1" fill="#E9E6D6"/><rect x="0" y="0" width="1" height="20" fill="#E9E6D6"/><rect x="7.4" y="0" width="1.6" height="20" fill="#4E4E44"/><rect x="0" y="19" width="9" height="1" fill="#4E4E44"/><rect x="0" y="8.5" width="8" height="1" fill="#5E5E52"/><rect x="0" y="9.5" width="8" height="1" fill="#F0EEE0"/><rect x="0" y="10.5" width="8" height="1" fill="#8A8878"/><path d="M4.0 1.7999999999999998 L7.6 6.2 L0.3999999999999999 6.2 Z" fill="#111"/><path d="M4.0 18.2 L7.6 13.8 L0.3999999999999999 13.8 Z" fill="#111"/></svg></div>
<div class="fld" style="left:885px;top:92px;width:40px;height:20px;font-size:12px;font-weight:normal;"><span style="display:inline-block;transform:scaleX(0.9);">50.0</span></div>
<div class="lbl" style="left:37px;top:317px;width:53px;height:18px;font-size:14px;font-weight:bold;">Min L*</div>
<div class="spin" style="left:28px;top:338px;width:9px;height:21px;"><svg width="9" height="21" viewBox="0 0 9 21"><rect x="0" y="0" width="9" height="21" fill="#D3CFBD"/><rect x="0" y="0" width="9" height="1" fill="#E9E6D6"/><rect x="0" y="0" width="1" height="21" fill="#E9E6D6"/><rect x="7.4" y="0" width="1.6" height="21" fill="#4E4E44"/><rect x="0" y="20" width="9" height="1" fill="#4E4E44"/><rect x="0" y="9.0" width="8" height="1" fill="#5E5E52"/><rect x="0" y="10.0" width="8" height="1" fill="#F0EEE0"/><rect x="0" y="11.0" width="8" height="1" fill="#8A8878"/><path d="M4.0 2.05 L7.6 6.45 L0.3999999999999999 6.45 Z" fill="#111"/><path d="M4.0 18.95 L7.6 14.55 L0.3999999999999999 14.55 Z" fill="#111"/></svg></div>
<div class="fld" style="left:39px;top:340px;width:52px;height:19px;font-size:13px;font-weight:bold;">18.0</div>
<div class="lbl" style="left:231px;top:320px;width:57px;height:17px;font-size:14px;font-weight:bold;">Max L*</div>
<div class="spin" style="left:223px;top:338px;width:9px;height:21px;"><svg width="9" height="21" viewBox="0 0 9 21"><rect x="0" y="0" width="9" height="21" fill="#D3CFBD"/><rect x="0" y="0" width="9" height="1" fill="#E9E6D6"/><rect x="0" y="0" width="1" height="21" fill="#E9E6D6"/><rect x="7.4" y="0" width="1.6" height="21" fill="#4E4E44"/><rect x="0" y="20" width="9" height="1" fill="#4E4E44"/><rect x="0" y="9.0" width="8" height="1" fill="#5E5E52"/><rect x="0" y="10.0" width="8" height="1" fill="#F0EEE0"/><rect x="0" y="11.0" width="8" height="1" fill="#8A8878"/><path d="M4.0 2.05 L7.6 6.45 L0.3999999999999999 6.45 Z" fill="#111"/><path d="M4.0 18.95 L7.6 14.55 L0.3999999999999999 14.55 Z" fill="#111"/></svg></div>
<div class="fld" style="left:233px;top:340px;width:54px;height:19px;font-size:13px;font-weight:bold;">102.0</div>
<div class="abs" style="left:96px;top:309px;width:133px;height:22px;"><svg width="133" height="22" viewBox="96 309 133 22"><rect x="108.5" y="311.5" width="108" height="13" rx="6.5" fill="#F6F4EA"/><rect x="108.5" y="311.5" width="108" height="11.5" rx="6.5" fill="#DAD6C4"/><rect x="110" y="313" width="105" height="10" rx="5.0" fill="#70759A"/><path d="M106 314 L102 317.5 L105.5 322.5" fill="none" stroke="#D2C48E" stroke-width="0.9"/><path d="M106 314 V322.5" stroke="#E4DDBE" stroke-width="0.8"/><path d="M219 314 L223 317.5 L219.5 322.5" fill="none" stroke="#DCD2A8" stroke-width="0.9"/><path d="M219 314 V322.5" stroke="#F6F3E6" stroke-width="0.8"/><path d="M206.7 312.5 Q206.4 309.7 211 309.4 Q215.6 309.7 215.3 312.5 L214.9 317.5 Q213.8 324.5 211 328 Q208.2 324.5 207.1 317.5 Z" fill="#F4F2E4" stroke="#C4BFA8" stroke-width="0.6"/><path d="M212.6 310.4 Q215 310.6 214.9 313 L214.5 318 Q213.4 324 211.4 327 Q213 319 212.6 310.4 Z" fill="#CFCBB6" opacity="0.85"/></svg></div>
<div class="abs" style="left:94px;top:328px;width:132px;height:22px;"><svg width="132" height="22" viewBox="94 328 132 22"><rect x="106.5" y="330.5" width="107" height="13" rx="6.5" fill="#F6F4EA"/><rect x="106.5" y="330.5" width="107" height="11.5" rx="6.5" fill="#DAD6C4"/><rect x="108" y="332" width="104" height="10" rx="5.0" fill="#70759A"/><path d="M104 333 L100 336.5 L103.5 341.5" fill="none" stroke="#D2C48E" stroke-width="0.9"/><path d="M104 333 V341.5" stroke="#E4DDBE" stroke-width="0.8"/><path d="M216 333 L220 336.5 L216.5 341.5" fill="none" stroke="#DCD2A8" stroke-width="0.9"/><path d="M216 333 V341.5" stroke="#F6F3E6" stroke-width="0.8"/><path d="M185.2 331.5 Q184.9 328.7 189.5 328.4 Q194.1 328.7 193.8 331.5 L193.4 336.5 Q192.3 343.5 189.5 347 Q186.7 343.5 185.6 336.5 Z" fill="#F4F2E4" stroke="#C4BFA8" stroke-width="0.6"/><path d="M191.1 329.4 Q193.5 329.6 193.4 332 L193.0 337 Q191.9 343 189.9 346 Q191.5 338 191.1 329.4 Z" fill="#CFCBB6" opacity="0.85"/></svg></div>
<div class="abs" style="left:95px;top:347px;width:132px;height:22px;"><svg width="132" height="22" viewBox="95 347 132 22"><rect x="107.5" y="349.5" width="107" height="13" rx="6.5" fill="#F6F4EA"/><rect x="107.5" y="349.5" width="107" height="11.5" rx="6.5" fill="#DAD6C4"/><rect x="109" y="351" width="104" height="10" rx="5.0" fill="#70759A"/><clipPath id="c109_351"><rect x="109" y="351" width="18" height="10"/></clipPath><rect x="109" y="351" width="104" height="10" rx="5.0" fill="#2050E6" clip-path="url(#c109_351)"/><path d="M105 352 L101 355.5 L104.5 360.5" fill="none" stroke="#D2C48E" stroke-width="0.9"/><path d="M105 352 V360.5" stroke="#E4DDBE" stroke-width="0.8"/><path d="M217 352 L221 355.5 L217.5 360.5" fill="none" stroke="#DCD2A8" stroke-width="0.9"/><path d="M217 352 V360.5" stroke="#F6F3E6" stroke-width="0.8"/><path d="M125.2 350.5 Q124.9 347.7 129.5 347.4 Q134.1 347.7 133.8 350.5 L133.4 355.5 Q132.3 362.5 129.5 366 Q126.7 362.5 125.6 355.5 Z" fill="#F4F2E4" stroke="#C4BFA8" stroke-width="0.6"/><path d="M131.1 348.4 Q133.5 348.6 133.4 351 L133.0 356 Q131.9 362 129.9 365 Q131.5 357 131.1 348.4 Z" fill="#CFCBB6" opacity="0.85"/></svg></div>
<div class="abs" style="left:112px;top:368px;width:1px;height:4px;background:#111;"></div>
<div class="abs" style="left:161px;top:368px;width:1px;height:4px;background:#111;"></div>
<div class="abs" style="left:210px;top:368px;width:1px;height:4px;background:#111;"></div>
<div class="lbl" style="left:55px;top:372px;width:67px;height:18px;font-size:14px;font-weight:bold;">Midle L*</div>
<div class="spin" style="left:125px;top:370px;width:9px;height:21px;"><svg width="9" height="21" viewBox="0 0 9 21"><rect x="0" y="0" width="9" height="21" fill="#D3CFBD"/><rect x="0" y="0" width="9" height="1" fill="#E9E6D6"/><rect x="0" y="0" width="1" height="21" fill="#E9E6D6"/><rect x="7.4" y="0" width="1.6" height="21" fill="#4E4E44"/><rect x="0" y="20" width="9" height="1" fill="#4E4E44"/><rect x="0" y="9.0" width="8" height="1" fill="#5E5E52"/><rect x="0" y="10.0" width="8" height="1" fill="#F0EEE0"/><rect x="0" y="11.0" width="8" height="1" fill="#8A8878"/><path d="M4.0 2.05 L7.6 6.45 L0.3999999999999999 6.45 Z" fill="#111"/><path d="M4.0 18.95 L7.6 14.55 L0.3999999999999999 14.55 Z" fill="#111"/></svg></div>
<div class="fld" style="left:136px;top:372px;width:52px;height:19px;font-size:13px;font-weight:bold;">58.3</div>
<div class="abs" style="left:261px;top:359px;width:41px;height:41px;"><svg width="41" height="41" viewBox="0 0 41 41"><defs><linearGradient id="mg" x1="0" y1="0" x2="1" y2="1"><stop offset="0" stop-color="#5A7196"/><stop offset="1" stop-color="#7C96BF"/></linearGradient><radialGradient id="ml" cx="0.45" cy="0.4" r="0.65"><stop offset="0" stop-color="#FFFFFF"/><stop offset="0.55" stop-color="#D2E2F6"/><stop offset="1" stop-color="#8EAEDC"/></radialGradient></defs><rect x="0" y="0" width="41" height="41" fill="#0A0A0A"/><rect x="1.2" y="1.2" width="38.6" height="38.6" fill="#A9B5CA"/><rect x="2.2" y="2.2" width="36.6" height="36.6" fill="url(#mg)"/><path d="M22 21.5 L26 18.5 L37.5 31.5 Q38.5 35 35.5 36 Q33 36.5 31.5 34.5 Z" fill="#E6935A"/><path d="M24.8 21.8 L35.5 33.8" stroke="#F8CDA2" stroke-width="2.2" fill="none"/><path d="M23 23.5 L33 35" stroke="#C9703A" stroke-width="1" fill="none"/><circle cx="15.2" cy="13" r="9.4" fill="url(#ml)" stroke="#9CB3D6" stroke-width="1.8"/><path d="M4.8 24.6 h5 v-5 h7 v5 h5 v7 h-5 v5 h-7 v-5 h-5 Z" fill="#FFFFFF"/><path d="M6.1 25.9 h5 v-5 h4.4 v5 h5 v4.4 h-5 v5 h-4.4 v-5 h-5 Z" fill="#2A6C9E"/></svg></div>
<div class="lbl" style="left:353px;top:320px;width:53px;height:17px;font-size:14px;font-weight:bold;">Min a*</div>
<div class="spin" style="left:347px;top:338px;width:9px;height:21px;"><svg width="9" height="21" viewBox="0 0 9 21"><rect x="0" y="0" width="9" height="21" fill="#D3CFBD"/><rect x="0" y="0" width="9" height="1" fill="#E9E6D6"/><rect x="0" y="0" width="1" height="21" fill="#E9E6D6"/><rect x="7.4" y="0" width="1.6" height="21" fill="#4E4E44"/><rect x="0" y="20" width="9" height="1" fill="#4E4E44"/><rect x="0" y="9.0" width="8" height="1" fill="#5E5E52"/><rect x="0" y="10.0" width="8" height="1" fill="#F0EEE0"/><rect x="0" y="11.0" width="8" height="1" fill="#8A8878"/><path d="M4.0 2.05 L7.6 6.45 L0.3999999999999999 6.45 Z" fill="#111"/><path d="M4.0 18.95 L7.6 14.55 L0.3999999999999999 14.55 Z" fill="#111"/></svg></div>
<div class="fld" style="left:357px;top:340px;width:53px;height:19px;font-size:13px;font-weight:bold;">-5.0</div>
<div class="lbl" style="left:548px;top:320px;width:57px;height:17px;font-size:14px;font-weight:bold;">Max a*</div>
<div class="spin" style="left:540px;top:338px;width:9px;height:21px;"><svg width="9" height="21" viewBox="0 0 9 21"><rect x="0" y="0" width="9" height="21" fill="#D3CFBD"/><rect x="0" y="0" width="9" height="1" fill="#E9E6D6"/><rect x="0" y="0" width="1" height="21" fill="#E9E6D6"/><rect x="7.4" y="0" width="1.6" height="21" fill="#4E4E44"/><rect x="0" y="20" width="9" height="1" fill="#4E4E44"/><rect x="0" y="9.0" width="8" height="1" fill="#5E5E52"/><rect x="0" y="10.0" width="8" height="1" fill="#F0EEE0"/><rect x="0" y="11.0" width="8" height="1" fill="#8A8878"/><path d="M4.0 2.05 L7.6 6.45 L0.3999999999999999 6.45 Z" fill="#111"/><path d="M4.0 18.95 L7.6 14.55 L0.3999999999999999 14.55 Z" fill="#111"/></svg></div>
<div class="fld" style="left:551px;top:340px;width:52px;height:19px;font-size:13px;font-weight:bold;">12.0</div>
<div class="abs" style="left:413px;top:309px;width:132px;height:22px;"><svg width="132" height="22" viewBox="413 309 132 22"><rect x="425.5" y="311.5" width="107" height="13" rx="6.5" fill="#F6F4EA"/><rect x="425.5" y="311.5" width="107" height="11.5" rx="6.5" fill="#DAD6C4"/><rect x="427" y="313" width="104" height="10" rx="5.0" fill="#70759A"/><clipPath id="c427_313"><rect x="488" y="313" width="43" height="10"/></clipPath><rect x="427" y="313" width="104" height="10" rx="5.0" fill="#2050E6" clip-path="url(#c427_313)"/><path d="M423 314 L419 317.5 L422.5 322.5" fill="none" stroke="#D2C48E" stroke-width="0.9"/><path d="M423 314 V322.5" stroke="#E4DDBE" stroke-width="0.8"/><path d="M535 314 L539 317.5 L535.5 322.5" fill="none" stroke="#DCD2A8" stroke-width="0.9"/><path d="M535 314 V322.5" stroke="#F6F3E6" stroke-width="0.8"/><path d="M481.2 312.5 Q480.9 309.7 485.5 309.4 Q490.1 309.7 489.8 312.5 L489.4 317.5 Q488.3 324.5 485.5 328 Q482.7 324.5 481.6 317.5 Z" fill="#F4F2E4" stroke="#C4BFA8" stroke-width="0.6"/><path d="M487.1 310.4 Q489.5 310.6 489.4 313 L489.0 318 Q487.9 324 485.9 327 Q487.5 319 487.1 310.4 Z" fill="#CFCBB6" opacity="0.85"/></svg></div>
<div class="abs" style="left:414px;top:328px;width:132px;height:22px;"><svg width="132" height="22" viewBox="414 328 132 22"><rect x="426.5" y="330.5" width="107" height="13" rx="6.5" fill="#F6F4EA"/><rect x="426.5" y="330.5" width="107" height="11.5" rx="6.5" fill="#DAD6C4"/><rect x="428" y="332" width="104" height="10" rx="5.0" fill="#70759A"/><path d="M424 333 L420 336.5 L423.5 341.5" fill="none" stroke="#D2C48E" stroke-width="0.9"/><path d="M424 333 V341.5" stroke="#E4DDBE" stroke-width="0.8"/><path d="M536 333 L540 336.5 L536.5 341.5" fill="none" stroke="#DCD2A8" stroke-width="0.9"/><path d="M536 333 V341.5" stroke="#F6F3E6" stroke-width="0.8"/><path d="M475.7 331.5 Q475.4 328.7 480 328.4 Q484.6 328.7 484.3 331.5 L483.9 336.5 Q482.8 343.5 480 347 Q477.2 343.5 476.1 336.5 Z" fill="#F4F2E4" stroke="#C4BFA8" stroke-width="0.6"/><path d="M481.6 329.4 Q484 329.6 483.9 332 L483.5 337 Q482.4 343 480.4 346 Q482 338 481.6 329.4 Z" fill="#CFCBB6" opacity="0.85"/></svg></div>
<div class="abs" style="left:415px;top:343px;width:132px;height:22px;"><svg width="132" height="22" viewBox="415 343 132 22"><rect x="427.5" y="345.5" width="107" height="13" rx="6.5" fill="#F6F4EA"/><rect x="427.5" y="345.5" width="107" height="11.5" rx="6.5" fill="#DAD6C4"/><rect x="429" y="347" width="104" height="10" rx="5.0" fill="#70759A"/><clipPath id="c429_347"><rect x="429" y="347" width="48" height="10"/></clipPath><rect x="429" y="347" width="104" height="10" rx="5.0" fill="#2050E6" clip-path="url(#c429_347)"/><path d="M425 348 L421 351.5 L424.5 356.5" fill="none" stroke="#D2C48E" stroke-width="0.9"/><path d="M425 348 V356.5" stroke="#E4DDBE" stroke-width="0.8"/><path d="M537 348 L541 351.5 L537.5 356.5" fill="none" stroke="#DCD2A8" stroke-width="0.9"/><path d="M537 348 V356.5" stroke="#F6F3E6" stroke-width="0.8"/><path d="M475.2 346.5 Q474.9 343.7 479.5 343.4 Q484.1 343.7 483.8 346.5 L483.4 351.5 Q482.3 358.5 479.5 362 Q476.7 358.5 475.6 351.5 Z" fill="#F4F2E4" stroke="#C4BFA8" stroke-width="0.6"/><path d="M481.1 344.4 Q483.5 344.6 483.4 347 L483.0 352 Q481.9 358 479.9 361 Q481.5 353 481.1 344.4 Z" fill="#CFCBB6" opacity="0.85"/></svg></div>
<div class="abs" style="left:432px;top:363px;width:1px;height:4px;background:#111;"></div>
<div class="abs" style="left:481px;top:363px;width:1px;height:4px;background:#111;"></div>
<div class="abs" style="left:530px;top:363px;width:1px;height:4px;background:#111;"></div>
<div class="lbl" style="left:375px;top:372px;width:68px;height:18px;font-size:14px;font-weight:bold;">Midle a*</div>
<div class="spin" style="left:445px;top:370px;width:9px;height:21px;"><svg width="9" height="21" viewBox="0 0 9 21"><rect x="0" y="0" width="9" height="21" fill="#D3CFBD"/><rect x="0" y="0" width="9" height="1" fill="#E9E6D6"/><rect x="0" y="0" width="1" height="21" fill="#E9E6D6"/><rect x="7.4" y="0" width="1.6" height="21" fill="#4E4E44"/><rect x="0" y="20" width="9" height="1" fill="#4E4E44"/><rect x="0" y="9.0" width="8" height="1" fill="#5E5E52"/><rect x="0" y="10.0" width="8" height="1" fill="#F0EEE0"/><rect x="0" y="11.0" width="8" height="1" fill="#8A8878"/><path d="M4.0 2.05 L7.6 6.45 L0.3999999999999999 6.45 Z" fill="#111"/><path d="M4.0 18.95 L7.6 14.55 L0.3999999999999999 14.55 Z" fill="#111"/></svg></div>
<div class="fld" style="left:455px;top:372px;width:53px;height:19px;font-size:13px;font-weight:bold;">1.0</div>
<div class="abs" style="left:588px;top:359px;width:41px;height:41px;"><svg width="41" height="41" viewBox="0 0 41 41"><defs><linearGradient id="mg" x1="0" y1="0" x2="1" y2="1"><stop offset="0" stop-color="#5A7196"/><stop offset="1" stop-color="#7C96BF"/></linearGradient><radialGradient id="ml" cx="0.45" cy="0.4" r="0.65"><stop offset="0" stop-color="#FFFFFF"/><stop offset="0.55" stop-color="#D2E2F6"/><stop offset="1" stop-color="#8EAEDC"/></radialGradient></defs><rect x="0" y="0" width="41" height="41" fill="#0A0A0A"/><rect x="1.2" y="1.2" width="38.6" height="38.6" fill="#A9B5CA"/><rect x="2.2" y="2.2" width="36.6" height="36.6" fill="url(#mg)"/><path d="M22 21.5 L26 18.5 L37.5 31.5 Q38.5 35 35.5 36 Q33 36.5 31.5 34.5 Z" fill="#E6935A"/><path d="M24.8 21.8 L35.5 33.8" stroke="#F8CDA2" stroke-width="2.2" fill="none"/><path d="M23 23.5 L33 35" stroke="#C9703A" stroke-width="1" fill="none"/><circle cx="15.2" cy="13" r="9.4" fill="url(#ml)" stroke="#9CB3D6" stroke-width="1.8"/><path d="M4.8 24.6 h5 v-5 h7 v5 h5 v7 h-5 v5 h-7 v-5 h-5 Z" fill="#FFFFFF"/><path d="M6.1 25.9 h5 v-5 h4.4 v5 h5 v4.4 h-5 v5 h-4.4 v-5 h-5 Z" fill="#2A6C9E"/></svg></div>
<div class="lbl" style="left:676px;top:318px;width:54px;height:17px;font-size:14px;font-weight:bold;">Min b*</div>
<div class="spin" style="left:672px;top:338px;width:9px;height:21px;"><svg width="9" height="21" viewBox="0 0 9 21"><rect x="0" y="0" width="9" height="21" fill="#D3CFBD"/><rect x="0" y="0" width="9" height="1" fill="#E9E6D6"/><rect x="0" y="0" width="1" height="21" fill="#E9E6D6"/><rect x="7.4" y="0" width="1.6" height="21" fill="#4E4E44"/><rect x="0" y="20" width="9" height="1" fill="#4E4E44"/><rect x="0" y="9.0" width="8" height="1" fill="#5E5E52"/><rect x="0" y="10.0" width="8" height="1" fill="#F0EEE0"/><rect x="0" y="11.0" width="8" height="1" fill="#8A8878"/><path d="M4.0 2.05 L7.6 6.45 L0.3999999999999999 6.45 Z" fill="#111"/><path d="M4.0 18.95 L7.6 14.55 L0.3999999999999999 14.55 Z" fill="#111"/></svg></div>
<div class="fld" style="left:683px;top:339px;width:52px;height:19px;font-size:13px;font-weight:bold;">-5.0</div>
<div class="lbl" style="left:873px;top:319px;width:57px;height:17px;font-size:14px;font-weight:bold;">Max b*</div>
<div class="spin" style="left:864px;top:337px;width:9px;height:21px;"><svg width="9" height="21" viewBox="0 0 9 21"><rect x="0" y="0" width="9" height="21" fill="#D3CFBD"/><rect x="0" y="0" width="9" height="1" fill="#E9E6D6"/><rect x="0" y="0" width="1" height="21" fill="#E9E6D6"/><rect x="7.4" y="0" width="1.6" height="21" fill="#4E4E44"/><rect x="0" y="20" width="9" height="1" fill="#4E4E44"/><rect x="0" y="9.0" width="8" height="1" fill="#5E5E52"/><rect x="0" y="10.0" width="8" height="1" fill="#F0EEE0"/><rect x="0" y="11.0" width="8" height="1" fill="#8A8878"/><path d="M4.0 2.05 L7.6 6.45 L0.3999999999999999 6.45 Z" fill="#111"/><path d="M4.0 18.95 L7.6 14.55 L0.3999999999999999 14.55 Z" fill="#111"/></svg></div>
<div class="fld" style="left:874px;top:338px;width:53px;height:19px;font-size:13px;font-weight:bold;">13.0</div>
<div class="abs" style="left:736px;top:308px;width:133px;height:22px;"><svg width="133" height="22" viewBox="736 308 133 22"><rect x="748.5" y="310.5" width="108" height="13" rx="6.5" fill="#F6F4EA"/><rect x="748.5" y="310.5" width="108" height="11.5" rx="6.5" fill="#DAD6C4"/><rect x="750" y="312" width="105" height="10" rx="5.0" fill="#70759A"/><clipPath id="c750_312"><rect x="812" y="312" width="43" height="10"/></clipPath><rect x="750" y="312" width="105" height="10" rx="5.0" fill="#2050E6" clip-path="url(#c750_312)"/><path d="M746 313 L742 316.5 L745.5 321.5" fill="none" stroke="#D2C48E" stroke-width="0.9"/><path d="M746 313 V321.5" stroke="#E4DDBE" stroke-width="0.8"/><path d="M859 313 L863 316.5 L859.5 321.5" fill="none" stroke="#DCD2A8" stroke-width="0.9"/><path d="M859 313 V321.5" stroke="#F6F3E6" stroke-width="0.8"/><path d="M804.7 311.5 Q804.4 308.7 809 308.4 Q813.6 308.7 813.3 311.5 L812.9 316.5 Q811.8 323.5 809 327 Q806.2 323.5 805.1 316.5 Z" fill="#F4F2E4" stroke="#C4BFA8" stroke-width="0.6"/><path d="M810.6 309.4 Q813 309.6 812.9 312 L812.5 317 Q811.4 323 809.4 326 Q811 318 810.6 309.4 Z" fill="#CFCBB6" opacity="0.85"/></svg></div>
<div class="abs" style="left:737px;top:327px;width:133px;height:22px;"><svg width="133" height="22" viewBox="737 327 133 22"><rect x="749.5" y="329.5" width="108" height="13" rx="6.5" fill="#F6F4EA"/><rect x="749.5" y="329.5" width="108" height="11.5" rx="6.5" fill="#DAD6C4"/><rect x="751" y="331" width="105" height="10" rx="5.0" fill="#70759A"/><path d="M747 332 L743 335.5 L746.5 340.5" fill="none" stroke="#D2C48E" stroke-width="0.9"/><path d="M747 332 V340.5" stroke="#E4DDBE" stroke-width="0.8"/><path d="M860 332 L864 335.5 L860.5 340.5" fill="none" stroke="#DCD2A8" stroke-width="0.9"/><path d="M860 332 V340.5" stroke="#F6F3E6" stroke-width="0.8"/><path d="M799.7 330.5 Q799.4 327.7 804 327.4 Q808.6 327.7 808.3 330.5 L807.9 335.5 Q806.8 342.5 804 346 Q801.2 342.5 800.1 335.5 Z" fill="#F4F2E4" stroke="#C4BFA8" stroke-width="0.6"/><path d="M805.6 328.4 Q808 328.6 807.9 331 L807.5 336 Q806.4 342 804.4 345 Q806 337 805.6 328.4 Z" fill="#CFCBB6" opacity="0.85"/></svg></div>
<div class="abs" style="left:738px;top:342px;width:133px;height:22px;"><svg width="133" height="22" viewBox="738 342 133 22"><rect x="750.5" y="344.5" width="108" height="13" rx="6.5" fill="#F6F4EA"/><rect x="750.5" y="344.5" width="108" height="11.5" rx="6.5" fill="#DAD6C4"/><rect x="752" y="346" width="105" height="10" rx="5.0" fill="#70759A"/><clipPath id="c752_346"><rect x="752" y="346" width="49" height="10"/></clipPath><rect x="752" y="346" width="105" height="10" rx="5.0" fill="#2050E6" clip-path="url(#c752_346)"/><path d="M748 347 L744 350.5 L747.5 355.5" fill="none" stroke="#D2C48E" stroke-width="0.9"/><path d="M748 347 V355.5" stroke="#E4DDBE" stroke-width="0.8"/><path d="M861 347 L865 350.5 L861.5 355.5" fill="none" stroke="#DCD2A8" stroke-width="0.9"/><path d="M861 347 V355.5" stroke="#F6F3E6" stroke-width="0.8"/><path d="M798.7 345.5 Q798.4 342.7 803 342.4 Q807.6 342.7 807.3 345.5 L806.9 350.5 Q805.8 357.5 803 361 Q800.2 357.5 799.1 350.5 Z" fill="#F4F2E4" stroke="#C4BFA8" stroke-width="0.6"/><path d="M804.6 343.4 Q807 343.6 806.9 346 L806.5 351 Q805.4 357 803.4 360 Q805 352 804.6 343.4 Z" fill="#CFCBB6" opacity="0.85"/></svg></div>
<div class="abs" style="left:756px;top:362px;width:1px;height:4px;background:#111;"></div>
<div class="abs" style="left:805px;top:362px;width:1px;height:4px;background:#111;"></div>
<div class="abs" style="left:854px;top:362px;width:1px;height:4px;background:#111;"></div>
<div class="lbl" style="left:699px;top:371px;width:68px;height:18px;font-size:14px;font-weight:bold;">Midle b*</div>
<div class="spin" style="left:769px;top:369px;width:9px;height:21px;"><svg width="9" height="21" viewBox="0 0 9 21"><rect x="0" y="0" width="9" height="21" fill="#D3CFBD"/><rect x="0" y="0" width="9" height="1" fill="#E9E6D6"/><rect x="0" y="0" width="1" height="21" fill="#E9E6D6"/><rect x="7.4" y="0" width="1.6" height="21" fill="#4E4E44"/><rect x="0" y="20" width="9" height="1" fill="#4E4E44"/><rect x="0" y="9.0" width="8" height="1" fill="#5E5E52"/><rect x="0" y="10.0" width="8" height="1" fill="#F0EEE0"/><rect x="0" y="11.0" width="8" height="1" fill="#8A8878"/><path d="M4.0 2.05 L7.6 6.45 L0.3999999999999999 6.45 Z" fill="#111"/><path d="M4.0 18.95 L7.6 14.55 L0.3999999999999999 14.55 Z" fill="#111"/></svg></div>
<div class="fld" style="left:779px;top:371px;width:53px;height:19px;font-size:13px;font-weight:bold;">1.0</div>
<div class="abs" style="left:898px;top:359px;width:41px;height:41px;"><svg width="41" height="41" viewBox="0 0 41 41"><defs><linearGradient id="mg" x1="0" y1="0" x2="1" y2="1"><stop offset="0" stop-color="#5A7196"/><stop offset="1" stop-color="#7C96BF"/></linearGradient><radialGradient id="ml" cx="0.45" cy="0.4" r="0.65"><stop offset="0" stop-color="#FFFFFF"/><stop offset="0.55" stop-color="#D2E2F6"/><stop offset="1" stop-color="#8EAEDC"/></radialGradient></defs><rect x="0" y="0" width="41" height="41" fill="#0A0A0A"/><rect x="1.2" y="1.2" width="38.6" height="38.6" fill="#A9B5CA"/><rect x="2.2" y="2.2" width="36.6" height="36.6" fill="url(#mg)"/><path d="M22 21.5 L26 18.5 L37.5 31.5 Q38.5 35 35.5 36 Q33 36.5 31.5 34.5 Z" fill="#E6935A"/><path d="M24.8 21.8 L35.5 33.8" stroke="#F8CDA2" stroke-width="2.2" fill="none"/><path d="M23 23.5 L33 35" stroke="#C9703A" stroke-width="1" fill="none"/><circle cx="15.2" cy="13" r="9.4" fill="url(#ml)" stroke="#9CB3D6" stroke-width="1.8"/><path d="M4.8 24.6 h5 v-5 h7 v5 h5 v7 h-5 v5 h-7 v-5 h-5 Z" fill="#FFFFFF"/><path d="M6.1 25.9 h5 v-5 h4.4 v5 h5 v4.4 h-5 v5 h-4.4 v-5 h-5 Z" fill="#2A6C9E"/></svg></div>
<div class="lbl" style="left:946px;top:130px;width:67px;height:17px;font-size:14px;font-weight:bold;">Settings</div>
<div class="abs" style="left:985px;top:152px;width:26px;height:112px;"><svg width="26" height="112" viewBox="985 152 26 112"><rect x="991.5" y="155.5" width="12" height="104" rx="6" fill="#F6F4EA"/><rect x="993" y="157" width="9" height="101" rx="4.5" fill="#70759A"/><path d="M994 254 h7 l-3.5 4 Z" fill="#222"/><path d="M989 207.5 Q991 202.5 997 202.5 L1004 203.5 Q1006 207.5 1004 211.5 L997 212.5 Q991 212.5 989 207.5 Z" fill="#F59A1E" stroke="#D87E10" stroke-width="0.6"/></svg></div>
<div class="abs" style="left:920px;top:155px;width:64px;text-align:right;font-size:12.5px;font-weight:bold;line-height:14px;letter-spacing:0.2px;">Black</div>
<div class="tk" style="left:985px;top:162px;width:4px;height:1px;"></div>
<div class="abs" style="left:920px;top:201px;width:64px;text-align:right;font-size:12.5px;font-weight:bold;line-height:14px;letter-spacing:0.2px;">Red</div>
<div class="tk" style="left:985px;top:208px;width:4px;height:1px;"></div>
<div class="abs" style="left:920px;top:247px;width:64px;text-align:right;font-size:12.5px;font-weight:bold;line-height:14px;letter-spacing:0.2px;">Yellow</div>
<div class="tk" style="left:985px;top:254px;width:4px;height:1px;"></div>
<div class="lbl" style="left:960px;top:268px;width:56px;height:28px;font-size:12px;font-weight:bold;"><span style="text-align:center;line-height:13px;">Smooth<br>Average</span></div>
<div class="abs" style="left:978px;top:294px;width:26px;height:114px;"><svg width="26" height="114" viewBox="978 294 26 114"><rect x="983.5" y="297.5" width="13" height="112" rx="6.5" fill="#D9D5C2"/><rect x="985" y="299" width="11.5" height="112" rx="5.7" fill="#F3F1E4"/><path d="M982 400 Q984 395 990 395 L998 396 Q1000 400 998 404 L990 405 Q984 405 982 400 Z" fill="#F59A1E" stroke="#D87E10" stroke-width="0.6"/></svg></div>
<div class="ax" style="left:935px;top:296px;width:40px;text-align:right;transform:scaleX(0.88);transform-origin:right center;">100</div>
<div class="tk" style="left:976px;top:302px;width:4px;height:1px;"></div>
<div class="ax" style="left:935px;top:316px;width:40px;text-align:right;transform:scaleX(0.88);transform-origin:right center;">80</div>
<div class="tk" style="left:976px;top:322px;width:4px;height:1px;"></div>
<div class="ax" style="left:935px;top:336px;width:40px;text-align:right;transform:scaleX(0.88);transform-origin:right center;">60</div>
<div class="tk" style="left:976px;top:342px;width:4px;height:1px;"></div>
<div class="ax" style="left:935px;top:355px;width:40px;text-align:right;transform:scaleX(0.88);transform-origin:right center;">40</div>
<div class="tk" style="left:976px;top:361px;width:4px;height:1px;"></div>
<div class="ax" style="left:935px;top:375px;width:40px;text-align:right;transform:scaleX(0.88);transform-origin:right center;">20</div>
<div class="tk" style="left:976px;top:381px;width:4px;height:1px;"></div>
<div class="ax" style="left:935px;top:394px;width:40px;text-align:right;transform:scaleX(0.88);transform-origin:right center;">0</div>
<div class="tk" style="left:976px;top:400px;width:4px;height:1px;"></div>
<div class="abs" style="left:8px;top:412px;width:333px;height:1px;background:#B8B5A8;"></div>
<div class="abs" style="left:300px;top:414px;width:42px;height:14px;background:#FFFFFF;"></div>
<div class="ax" style="left:635px;top:456px;width:40px;text-align:right;transform:scaleX(0.88);transform-origin:right center;">0</div>
<div class="ax" style="left:635px;top:493px;width:40px;text-align:right;transform:scaleX(0.88);transform-origin:right center;">50</div>
<div class="ax" style="left:635px;top:530px;width:40px;text-align:right;transform:scaleX(0.88);transform-origin:right center;">100</div>
<div class="ax" style="left:635px;top:567px;width:40px;text-align:right;transform:scaleX(0.88);transform-origin:right center;">150</div>
<div class="ax" style="left:635px;top:604px;width:40px;text-align:right;transform:scaleX(0.88);transform-origin:right center;">200</div>
<div class="ax" style="left:635px;top:633px;width:40px;text-align:right;transform:scaleX(0.88);transform-origin:right center;">239</div>
<div class="abs" style="left:667px;top:443px;font-size:13px;font-weight:bold;line-height:14px;">H*</div>
<div class="fld" style="left:960px;top:425px;width:54px;height:19px;"></div>
<div class="lbl" style="left:960px;top:456px;width:47px;height:20px;font-size:12px;font-weight:bold;"></div>
<div class="ind" style="left:960px;top:483px;width:48px;height:23px;"></div>
<div class="lbl" style="left:960px;top:514px;width:47px;height:21px;font-size:12px;font-weight:bold;"></div>
<div class="ind" style="left:960px;top:539px;width:48px;height:22px;"></div>
<div class="lbl" style="left:950px;top:566px;width:61px;height:21px;font-size:12px;font-weight:bold;"></div>
<div class="abs" style="left:1003px;top:568px;font-size:15px;font-weight:bold;line-height:16px;">y</div>
<div class="ind" style="left:960px;top:592px;width:48px;height:22px;"></div>
<div class="abs" style="left:944px;top:624px;width:74px;height:33px;box-sizing:border-box;background:linear-gradient(to bottom,#F4F2E8,#E6E3D3 70%,#D8D4C0);border:1px solid #222;border-right:2px solid #333;border-bottom:2px solid #333;box-shadow:inset 1px 1px 0 #FFFFFF, inset -1px -1px 0 #A8A490;display:flex;align-items:center;justify-content:center;font-size:22px;font-weight:bold;line-height:1;"><span style="display:block;width:100%;text-align:right;padding-right:6px;">Cancel</span></div>
<div class="abs" style="left:958px;top:666px;width:46px;height:33px;box-sizing:border-box;background:linear-gradient(to bottom,#F4F2E8,#E6E3D3 70%,#D8D4C0);border:1px solid #222;border-right:2px solid #333;border-bottom:2px solid #333;box-shadow:inset 1px 1px 0 #FFFFFF, inset -1px -1px 0 #A8A490;display:flex;align-items:center;justify-content:center;font-size:22px;font-weight:bold;line-height:1;"><span><u>O</u>K</span></div>
<div class="lbl" style="left:44px;top:664px;width:55px;height:18px;font-size:14px;font-weight:bold;">Min C*</div>
<div class="spin" style="left:40px;top:686px;width:9px;height:21px;"><svg width="9" height="21" viewBox="0 0 9 21"><rect x="0" y="0" width="9" height="21" fill="#D3CFBD"/><rect x="0" y="0" width="9" height="1" fill="#E9E6D6"/><rect x="0" y="0" width="1" height="21" fill="#E9E6D6"/><rect x="7.4" y="0" width="1.6" height="21" fill="#4E4E44"/><rect x="0" y="20" width="9" height="1" fill="#4E4E44"/><rect x="0" y="9.0" width="8" height="1" fill="#5E5E52"/><rect x="0" y="10.0" width="8" height="1" fill="#F0EEE0"/><rect x="0" y="11.0" width="8" height="1" fill="#8A8878"/><path d="M4.0 2.05 L7.6 6.45 L0.3999999999999999 6.45 Z" fill="#111"/><path d="M4.0 18.95 L7.6 14.55 L0.3999999999999999 14.55 Z" fill="#111"/></svg></div>
<div class="fld" style="left:50px;top:687px;width:53px;height:19px;font-size:13px;font-weight:bold;">-15.0</div>
<div class="lbl" style="left:240px;top:664px;width:58px;height:18px;font-size:14px;font-weight:bold;">Max C*</div>
<div class="spin" style="left:232px;top:686px;width:9px;height:21px;"><svg width="9" height="21" viewBox="0 0 9 21"><rect x="0" y="0" width="9" height="21" fill="#D3CFBD"/><rect x="0" y="0" width="9" height="1" fill="#E9E6D6"/><rect x="0" y="0" width="1" height="21" fill="#E9E6D6"/><rect x="7.4" y="0" width="1.6" height="21" fill="#4E4E44"/><rect x="0" y="20" width="9" height="1" fill="#4E4E44"/><rect x="0" y="9.0" width="8" height="1" fill="#5E5E52"/><rect x="0" y="10.0" width="8" height="1" fill="#F0EEE0"/><rect x="0" y="11.0" width="8" height="1" fill="#8A8878"/><path d="M4.0 2.05 L7.6 6.45 L0.3999999999999999 6.45 Z" fill="#111"/><path d="M4.0 18.95 L7.6 14.55 L0.3999999999999999 14.55 Z" fill="#111"/></svg></div>
<div class="fld" style="left:242px;top:687px;width:53px;height:19px;font-size:13px;font-weight:bold;">17.0</div>
<div class="abs" style="left:106px;top:657px;width:132px;height:22px;"><svg width="132" height="22" viewBox="106 657 132 22"><rect x="118.5" y="659.5" width="107" height="13" rx="6.5" fill="#F6F4EA"/><rect x="118.5" y="659.5" width="107" height="11.5" rx="6.5" fill="#DAD6C4"/><rect x="120" y="661" width="104" height="10" rx="5.0" fill="#70759A"/><clipPath id="c120_661"><rect x="182" y="661" width="42" height="10"/></clipPath><rect x="120" y="661" width="104" height="10" rx="5.0" fill="#2050E6" clip-path="url(#c120_661)"/><path d="M116 662 L112 665.5 L115.5 670.5" fill="none" stroke="#D2C48E" stroke-width="0.9"/><path d="M116 662 V670.5" stroke="#E4DDBE" stroke-width="0.8"/><path d="M228 662 L232 665.5 L228.5 670.5" fill="none" stroke="#DCD2A8" stroke-width="0.9"/><path d="M228 662 V670.5" stroke="#F6F3E6" stroke-width="0.8"/><path d="M174.7 660.5 Q174.4 657.7 179 657.4 Q183.6 657.7 183.3 660.5 L182.9 665.5 Q181.8 672.5 179 676 Q176.2 672.5 175.1 665.5 Z" fill="#F4F2E4" stroke="#C4BFA8" stroke-width="0.6"/><path d="M180.6 658.4 Q183 658.6 182.9 661 L182.5 666 Q181.4 672 179.4 675 Q181 667 180.6 658.4 Z" fill="#CFCBB6" opacity="0.85"/></svg></div>
<div class="abs" style="left:106px;top:676px;width:132px;height:22px;"><svg width="132" height="22" viewBox="106 676 132 22"><rect x="118.5" y="678.5" width="107" height="13" rx="6.5" fill="#F6F4EA"/><rect x="118.5" y="678.5" width="107" height="11.5" rx="6.5" fill="#DAD6C4"/><rect x="120" y="680" width="104" height="10" rx="5.0" fill="#70759A"/><path d="M116 681 L112 684.5 L115.5 689.5" fill="none" stroke="#D2C48E" stroke-width="0.9"/><path d="M116 681 V689.5" stroke="#E4DDBE" stroke-width="0.8"/><path d="M228 681 L232 684.5 L228.5 689.5" fill="none" stroke="#DCD2A8" stroke-width="0.9"/><path d="M228 681 V689.5" stroke="#F6F3E6" stroke-width="0.8"/><path d="M170.7 679.5 Q170.4 676.7 175 676.4 Q179.6 676.7 179.3 679.5 L178.9 684.5 Q177.8 691.5 175 695 Q172.2 691.5 171.1 684.5 Z" fill="#F4F2E4" stroke="#C4BFA8" stroke-width="0.6"/><path d="M176.6 677.4 Q179 677.6 178.9 680 L178.5 685 Q177.4 691 175.4 694 Q177 686 176.6 677.4 Z" fill="#CFCBB6" opacity="0.85"/></svg></div>
<div class="abs" style="left:107px;top:691px;width:132px;height:22px;"><svg width="132" height="22" viewBox="107 691 132 22"><rect x="119.5" y="693.5" width="107" height="13" rx="6.5" fill="#F6F4EA"/><rect x="119.5" y="693.5" width="107" height="11.5" rx="6.5" fill="#DAD6C4"/><rect x="121" y="695" width="104" height="10" rx="5.0" fill="#70759A"/><clipPath id="c121_695"><rect x="121" y="695" width="44" height="10"/></clipPath><rect x="121" y="695" width="104" height="10" rx="5.0" fill="#2050E6" clip-path="url(#c121_695)"/><path d="M117 696 L113 699.5 L116.5 704.5" fill="none" stroke="#D2C48E" stroke-width="0.9"/><path d="M117 696 V704.5" stroke="#E4DDBE" stroke-width="0.8"/><path d="M229 696 L233 699.5 L229.5 704.5" fill="none" stroke="#DCD2A8" stroke-width="0.9"/><path d="M229 696 V704.5" stroke="#F6F3E6" stroke-width="0.8"/><path d="M161.7 694.5 Q161.4 691.7 166 691.4 Q170.6 691.7 170.3 694.5 L169.9 699.5 Q168.8 706.5 166 710 Q163.2 706.5 162.1 699.5 Z" fill="#F4F2E4" stroke="#C4BFA8" stroke-width="0.6"/><path d="M167.6 692.4 Q170 692.6 169.9 695 L169.5 700 Q168.4 706 166.4 709 Q168 701 167.6 692.4 Z" fill="#CFCBB6" opacity="0.85"/></svg></div>
<div class="abs" style="left:124px;top:711px;width:1px;height:4px;background:#111;"></div>
<div class="abs" style="left:173px;top:711px;width:1px;height:4px;background:#111;"></div>
<div class="abs" style="left:222px;top:711px;width:1px;height:4px;background:#111;"></div>
<div class="lbl" style="left:67px;top:720px;width:68px;height:18px;font-size:14px;font-weight:bold;">Midle C*</div>
<div class="spin" style="left:137px;top:718px;width:9px;height:21px;"><svg width="9" height="21" viewBox="0 0 9 21"><rect x="0" y="0" width="9" height="21" fill="#D3CFBD"/><rect x="0" y="0" width="9" height="1" fill="#E9E6D6"/><rect x="0" y="0" width="1" height="21" fill="#E9E6D6"/><rect x="7.4" y="0" width="1.6" height="21" fill="#4E4E44"/><rect x="0" y="20" width="9" height="1" fill="#4E4E44"/><rect x="0" y="9.0" width="8" height="1" fill="#5E5E52"/><rect x="0" y="10.0" width="8" height="1" fill="#F0EEE0"/><rect x="0" y="11.0" width="8" height="1" fill="#8A8878"/><path d="M4.0 2.05 L7.6 6.45 L0.3999999999999999 6.45 Z" fill="#111"/><path d="M4.0 18.95 L7.6 14.55 L0.3999999999999999 14.55 Z" fill="#111"/></svg></div>
<div class="fld" style="left:148px;top:720px;width:52px;height:19px;font-size:13px;font-weight:bold;">7.0</div>
<div class="abs" style="left:263px;top:707px;width:41px;height:41px;"><svg width="41" height="41" viewBox="0 0 41 41"><defs><linearGradient id="mg" x1="0" y1="0" x2="1" y2="1"><stop offset="0" stop-color="#5A7196"/><stop offset="1" stop-color="#7C96BF"/></linearGradient><radialGradient id="ml" cx="0.45" cy="0.4" r="0.65"><stop offset="0" stop-color="#FFFFFF"/><stop offset="0.55" stop-color="#D2E2F6"/><stop offset="1" stop-color="#8EAEDC"/></radialGradient></defs><rect x="0" y="0" width="41" height="41" fill="#0A0A0A"/><rect x="1.2" y="1.2" width="38.6" height="38.6" fill="#A9B5CA"/><rect x="2.2" y="2.2" width="36.6" height="36.6" fill="url(#mg)"/><path d="M22 21.5 L26 18.5 L37.5 31.5 Q38.5 35 35.5 36 Q33 36.5 31.5 34.5 Z" fill="#E6935A"/><path d="M24.8 21.8 L35.5 33.8" stroke="#F8CDA2" stroke-width="2.2" fill="none"/><path d="M23 23.5 L33 35" stroke="#C9703A" stroke-width="1" fill="none"/><circle cx="15.2" cy="13" r="9.4" fill="url(#ml)" stroke="#9CB3D6" stroke-width="1.8"/><path d="M4.8 24.6 h5 v-5 h7 v5 h5 v7 h-5 v5 h-7 v-5 h-5 Z" fill="#FFFFFF"/><path d="M6.1 25.9 h5 v-5 h4.4 v5 h5 v4.4 h-5 v5 h-4.4 v-5 h-5 Z" fill="#2A6C9E"/></svg></div>
<div class="lbl" style="left:437px;top:676px;width:70px;height:22px;font-size:17px;font-weight:normal;letter-spacing:0.3px;">SizeMax</div>
<div class="spin" style="left:509px;top:675px;width:9px;height:27px;"><svg width="9" height="27" viewBox="0 0 9 27"><rect x="0" y="0" width="9" height="27" fill="#D3CFBD"/><rect x="0" y="0" width="9" height="1" fill="#E9E6D6"/><rect x="0" y="0" width="1" height="27" fill="#E9E6D6"/><rect x="7.4" y="0" width="1.6" height="27" fill="#4E4E44"/><rect x="0" y="26" width="9" height="1" fill="#4E4E44"/><rect x="0" y="12.0" width="8" height="1" fill="#5E5E52"/><rect x="0" y="13.0" width="8" height="1" fill="#F0EEE0"/><rect x="0" y="14.0" width="8" height="1" fill="#8A8878"/><path d="M4.0 3.55 L7.6 7.95 L0.3999999999999999 7.95 Z" fill="#111"/><path d="M4.0 23.45 L7.6 19.05 L0.3999999999999999 19.05 Z" fill="#111"/></svg></div>
<div class="fld" style="left:520px;top:676px;width:68px;height:25px;font-size:17.5px;font-weight:normal;">76800</div>
<div class="lbl" style="left:437px;top:716px;width:66px;height:22px;font-size:17px;font-weight:normal;letter-spacing:0.3px;">SizeMin</div>
<div class="spin" style="left:509px;top:714px;width:9px;height:27px;"><svg width="9" height="27" viewBox="0 0 9 27"><rect x="0" y="0" width="9" height="27" fill="#D3CFBD"/><rect x="0" y="0" width="9" height="1" fill="#E9E6D6"/><rect x="0" y="0" width="1" height="27" fill="#E9E6D6"/><rect x="7.4" y="0" width="1.6" height="27" fill="#4E4E44"/><rect x="0" y="26" width="9" height="1" fill="#4E4E44"/><rect x="0" y="12.0" width="8" height="1" fill="#5E5E52"/><rect x="0" y="13.0" width="8" height="1" fill="#F0EEE0"/><rect x="0" y="14.0" width="8" height="1" fill="#8A8878"/><path d="M4.0 3.55 L7.6 7.95 L0.3999999999999999 7.95 Z" fill="#111"/><path d="M4.0 23.45 L7.6 19.05 L0.3999999999999999 19.05 Z" fill="#111"/></svg></div>
<div class="fld" style="left:520px;top:716px;width:68px;height:25px;font-size:18px;font-weight:normal;">500</div>
<div class="abs" style="left:596px;top:688px;width:41px;height:41px;"><svg width="41" height="41" viewBox="0 0 41 41"><defs><linearGradient id="mg" x1="0" y1="0" x2="1" y2="1"><stop offset="0" stop-color="#5A7196"/><stop offset="1" stop-color="#7C96BF"/></linearGradient><radialGradient id="ml" cx="0.45" cy="0.4" r="0.65"><stop offset="0" stop-color="#FFFFFF"/><stop offset="0.55" stop-color="#D2E2F6"/><stop offset="1" stop-color="#8EAEDC"/></radialGradient></defs><rect x="0" y="0" width="41" height="41" fill="#0A0A0A"/><rect x="1.2" y="1.2" width="38.6" height="38.6" fill="#A9B5CA"/><rect x="2.2" y="2.2" width="36.6" height="36.6" fill="url(#mg)"/><path d="M22 21.5 L26 18.5 L37.5 31.5 Q38.5 35 35.5 36 Q33 36.5 31.5 34.5 Z" fill="#E6935A"/><path d="M24.8 21.8 L35.5 33.8" stroke="#F8CDA2" stroke-width="2.2" fill="none"/><path d="M23 23.5 L33 35" stroke="#C9703A" stroke-width="1" fill="none"/><circle cx="15.2" cy="13" r="9.4" fill="url(#ml)" stroke="#9CB3D6" stroke-width="1.8"/><path d="M4.8 24.6 h5 v-5 h7 v5 h5 v7 h-5 v5 h-7 v-5 h-5 Z" fill="#FFFFFF"/><path d="M6.1 25.9 h5 v-5 h4.4 v5 h5 v4.4 h-5 v5 h-4.4 v-5 h-5 Z" fill="#2A6C9E"/></svg></div>
<div class="lbl" style="left:664px;top:662px;width:56px;height:19px;font-size:14px;font-weight:bold;">Min H*</div>
<div class="spin" style="left:658px;top:685px;width:9px;height:20px;"><svg width="9" height="20" viewBox="0 0 9 20"><rect x="0" y="0" width="9" height="20" fill="#D3CFBD"/><rect x="0" y="0" width="9" height="1" fill="#E9E6D6"/><rect x="0" y="0" width="1" height="20" fill="#E9E6D6"/><rect x="7.4" y="0" width="1.6" height="20" fill="#4E4E44"/><rect x="0" y="19" width="9" height="1" fill="#4E4E44"/><rect x="0" y="8.5" width="8" height="1" fill="#5E5E52"/><rect x="0" y="9.5" width="8" height="1" fill="#F0EEE0"/><rect x="0" y="10.5" width="8" height="1" fill="#8A8878"/><path d="M4.0 1.7999999999999998 L7.6 6.2 L0.3999999999999999 6.2 Z" fill="#111"/><path d="M4.0 18.2 L7.6 13.8 L0.3999999999999999 13.8 Z" fill="#111"/></svg></div>
<div class="fld" style="left:669px;top:686px;width:52px;height:19px;font-size:13px;font-weight:bold;">-51.4</div>
<div class="lbl" style="left:872px;top:662px;width:58px;height:19px;font-size:14px;font-weight:bold;">Max H*</div>
<div class="spin" style="left:864px;top:685px;width:9px;height:20px;"><svg width="9" height="20" viewBox="0 0 9 20"><rect x="0" y="0" width="9" height="20" fill="#D3CFBD"/><rect x="0" y="0" width="9" height="1" fill="#E9E6D6"/><rect x="0" y="0" width="1" height="20" fill="#E9E6D6"/><rect x="7.4" y="0" width="1.6" height="20" fill="#4E4E44"/><rect x="0" y="19" width="9" height="1" fill="#4E4E44"/><rect x="0" y="8.5" width="8" height="1" fill="#5E5E52"/><rect x="0" y="9.5" width="8" height="1" fill="#F0EEE0"/><rect x="0" y="10.5" width="8" height="1" fill="#8A8878"/><path d="M4.0 1.7999999999999998 L7.6 6.2 L0.3999999999999999 6.2 Z" fill="#111"/><path d="M4.0 18.2 L7.6 13.8 L0.3999999999999999 13.8 Z" fill="#111"/></svg></div>
<div class="fld" style="left:875px;top:686px;width:53px;height:19px;font-size:13px;font-weight:bold;">360.0</div>
<div class="abs" style="left:732px;top:658px;width:132px;height:22px;"><svg width="132" height="22" viewBox="732 658 132 22"><rect x="744.5" y="660.5" width="107" height="13" rx="6.5" fill="#F6F4EA"/><rect x="744.5" y="660.5" width="107" height="11.5" rx="6.5" fill="#DAD6C4"/><rect x="746" y="662" width="104" height="10" rx="5.0" fill="#70759A"/><clipPath id="c746_662"><rect x="746" y="662" width="92" height="10"/></clipPath><rect x="746" y="662" width="104" height="10" rx="5.0" fill="#2050E6" clip-path="url(#c746_662)"/><path d="M742 663 L738 666.5 L741.5 671.5" fill="none" stroke="#D2C48E" stroke-width="0.9"/><path d="M742 663 V671.5" stroke="#E4DDBE" stroke-width="0.8"/><path d="M854 663 L858 666.5 L854.5 671.5" fill="none" stroke="#DCD2A8" stroke-width="0.9"/><path d="M854 663 V671.5" stroke="#F6F3E6" stroke-width="0.8"/><path d="M835.7 661.5 Q835.4 658.7 840 658.4 Q844.6 658.7 844.3 661.5 L843.9 666.5 Q842.8 673.5 840 677 Q837.2 673.5 836.1 666.5 Z" fill="#F4F2E4" stroke="#C4BFA8" stroke-width="0.6"/><path d="M841.6 659.4 Q844 659.6 843.9 662 L843.5 667 Q842.4 673 840.4 676 Q842 668 841.6 659.4 Z" fill="#CFCBB6" opacity="0.85"/></svg></div>
<div class="abs" style="left:732px;top:677px;width:132px;height:22px;"><svg width="132" height="22" viewBox="732 677 132 22"><rect x="744.5" y="679.5" width="107" height="13" rx="6.5" fill="#F6F4EA"/><rect x="744.5" y="679.5" width="107" height="11.5" rx="6.5" fill="#DAD6C4"/><rect x="746" y="681" width="104" height="10" rx="5.0" fill="#70759A"/><path d="M742 682 L738 685.5 L741.5 690.5" fill="none" stroke="#D2C48E" stroke-width="0.9"/><path d="M742 682 V690.5" stroke="#E4DDBE" stroke-width="0.8"/><path d="M854 682 L858 685.5 L854.5 690.5" fill="none" stroke="#DCD2A8" stroke-width="0.9"/><path d="M854 682 V690.5" stroke="#F6F3E6" stroke-width="0.8"/><path d="M833.2 680.5 Q832.9 677.7 837.5 677.4 Q842.1 677.7 841.8 680.5 L841.4 685.5 Q840.3 692.5 837.5 696 Q834.7 692.5 833.6 685.5 Z" fill="#F4F2E4" stroke="#C4BFA8" stroke-width="0.6"/><path d="M839.1 678.4 Q841.5 678.6 841.4 681 L841.0 686 Q839.9 692 837.9 695 Q839.5 687 839.1 678.4 Z" fill="#CFCBB6" opacity="0.85"/></svg></div>
<div class="abs" style="left:733px;top:692px;width:132px;height:22px;"><svg width="132" height="22" viewBox="733 692 132 22"><rect x="745.5" y="694.5" width="107" height="13" rx="6.5" fill="#F6F4EA"/><rect x="745.5" y="694.5" width="107" height="11.5" rx="6.5" fill="#DAD6C4"/><rect x="747" y="696" width="104" height="10" rx="5.0" fill="#70759A"/><clipPath id="c747_696"><rect x="747" y="696" width="44" height="10"/></clipPath><rect x="747" y="696" width="104" height="10" rx="5.0" fill="#2050E6" clip-path="url(#c747_696)"/><path d="M743 697 L739 700.5 L742.5 705.5" fill="none" stroke="#D2C48E" stroke-width="0.9"/><path d="M743 697 V705.5" stroke="#E4DDBE" stroke-width="0.8"/><path d="M855 697 L859 700.5 L855.5 705.5" fill="none" stroke="#DCD2A8" stroke-width="0.9"/><path d="M855 697 V705.5" stroke="#F6F3E6" stroke-width="0.8"/><path d="M787.7 695.5 Q787.4 692.7 792 692.4 Q796.6 692.7 796.3 695.5 L795.9 700.5 Q794.8 707.5 792 711 Q789.2 707.5 788.1 700.5 Z" fill="#F4F2E4" stroke="#C4BFA8" stroke-width="0.6"/><path d="M793.6 693.4 Q796 693.6 795.9 696 L795.5 701 Q794.4 707 792.4 710 Q794 702 793.6 693.4 Z" fill="#CFCBB6" opacity="0.85"/></svg></div>
<div class="abs" style="left:750px;top:712px;width:1px;height:4px;background:#111;"></div>
<div class="abs" style="left:799px;top:712px;width:1px;height:4px;background:#111;"></div>
<div class="abs" style="left:848px;top:712px;width:1px;height:4px;background:#111;"></div>
<div class="lbl" style="left:659px;top:709px;width:53px;height:15px;font-size:12.5px;font-weight:bold;">Delta a*</div>
<div class="spin" style="left:656px;top:725px;width:9px;height:21px;"><svg width="9" height="21" viewBox="0 0 9 21"><rect x="0" y="0" width="9" height="21" fill="#D3CFBD"/><rect x="0" y="0" width="9" height="1" fill="#E9E6D6"/><rect x="0" y="0" width="1" height="21" fill="#E9E6D6"/><rect x="7.4" y="0" width="1.6" height="21" fill="#4E4E44"/><rect x="0" y="20" width="9" height="1" fill="#4E4E44"/><rect x="0" y="9.0" width="8" height="1" fill="#5E5E52"/><rect x="0" y="10.0" width="8" height="1" fill="#F0EEE0"/><rect x="0" y="11.0" width="8" height="1" fill="#8A8878"/><path d="M4.0 2.05 L7.6 6.45 L0.3999999999999999 6.45 Z" fill="#111"/><path d="M4.0 18.95 L7.6 14.55 L0.3999999999999999 14.55 Z" fill="#111"/></svg></div>
<div class="fld" style="left:667px;top:726px;width:41px;height:19px;font-size:13px;font-weight:bold;">60.0</div>
<div class="lbl" style="left:720px;top:726px;width:70px;height:18px;font-size:14px;font-weight:bold;">Midle H*</div>
<div class="spin" style="left:791px;top:724px;width:9px;height:21px;"><svg width="9" height="21" viewBox="0 0 9 21"><rect x="0" y="0" width="9" height="21" fill="#D3CFBD"/><rect x="0" y="0" width="9" height="1" fill="#E9E6D6"/><rect x="0" y="0" width="1" height="21" fill="#E9E6D6"/><rect x="7.4" y="0" width="1.6" height="21" fill="#4E4E44"/><rect x="0" y="20" width="9" height="1" fill="#4E4E44"/><rect x="0" y="9.0" width="8" height="1" fill="#5E5E52"/><rect x="0" y="10.0" width="8" height="1" fill="#F0EEE0"/><rect x="0" y="11.0" width="8" height="1" fill="#8A8878"/><path d="M4.0 2.05 L7.6 6.45 L0.3999999999999999 6.45 Z" fill="#111"/><path d="M4.0 18.95 L7.6 14.55 L0.3999999999999999 14.55 Z" fill="#111"/></svg></div>
<div class="fld" style="left:801px;top:725px;width:53px;height:19px;font-size:13px;font-weight:bold;">323.3</div>
<div class="lbl" style="left:881px;top:710px;width:53px;height:15px;font-size:12.5px;font-weight:bold;">Delta b*</div>
<div class="spin" style="left:878px;top:726px;width:9px;height:21px;"><svg width="9" height="21" viewBox="0 0 9 21"><rect x="0" y="0" width="9" height="21" fill="#D3CFBD"/><rect x="0" y="0" width="9" height="1" fill="#E9E6D6"/><rect x="0" y="0" width="1" height="21" fill="#E9E6D6"/><rect x="7.4" y="0" width="1.6" height="21" fill="#4E4E44"/><rect x="0" y="20" width="9" height="1" fill="#4E4E44"/><rect x="0" y="9.0" width="8" height="1" fill="#5E5E52"/><rect x="0" y="10.0" width="8" height="1" fill="#F0EEE0"/><rect x="0" y="11.0" width="8" height="1" fill="#8A8878"/><path d="M4.0 2.05 L7.6 6.45 L0.3999999999999999 6.45 Z" fill="#111"/><path d="M4.0 18.95 L7.6 14.55 L0.3999999999999999 14.55 Z" fill="#111"/></svg></div>
<div class="fld" style="left:888px;top:727px;width:46px;height:19px;font-size:13px;font-weight:bold;">70.0</div>
<div class="abs" style="left:935px;top:708px;width:41px;height:41px;"><svg width="41" height="41" viewBox="0 0 41 41"><defs><linearGradient id="mg" x1="0" y1="0" x2="1" y2="1"><stop offset="0" stop-color="#5A7196"/><stop offset="1" stop-color="#7C96BF"/></linearGradient><radialGradient id="ml" cx="0.45" cy="0.4" r="0.65"><stop offset="0" stop-color="#FFFFFF"/><stop offset="0.55" stop-color="#D2E2F6"/><stop offset="1" stop-color="#8EAEDC"/></radialGradient></defs><rect x="0" y="0" width="41" height="41" fill="#0A0A0A"/><rect x="1.2" y="1.2" width="38.6" height="38.6" fill="#A9B5CA"/><rect x="2.2" y="2.2" width="36.6" height="36.6" fill="url(#mg)"/><path d="M22 21.5 L26 18.5 L37.5 31.5 Q38.5 35 35.5 36 Q33 36.5 31.5 34.5 Z" fill="#E6935A"/><path d="M24.8 21.8 L35.5 33.8" stroke="#F8CDA2" stroke-width="2.2" fill="none"/><path d="M23 23.5 L33 35" stroke="#C9703A" stroke-width="1" fill="none"/><circle cx="15.2" cy="13" r="9.4" fill="url(#ml)" stroke="#9CB3D6" stroke-width="1.8"/><path d="M4.8 24.6 h5 v-5 h7 v5 h5 v7 h-5 v5 h-7 v-5 h-5 Z" fill="#FFFFFF"/><path d="M6.1 25.9 h5 v-5 h4.4 v5 h5 v4.4 h-5 v5 h-4.4 v-5 h-5 Z" fill="#2A6C9E"/></svg></div>
<div class="abs" style="left:3px;top:395px;width:327px;height:272px;background:#7388DC;border-radius:8px 8px 0 0;overflow:hidden;"><div class="abs" style="left:0;top:0;width:327px;height:30px;background:linear-gradient(to bottom,#7B97E0 0%,#98B0EA 10%,#7E9AE2 30%,#7A96DF 70%,#7F9BE3 100%);"></div><div class="abs" style="left:25.5px;top:0;height:34px;line-height:34px;color:#D8E4F8;font-weight:bold;font-size:13px;text-shadow:none;white-space:nowrap;letter-spacing:-0.15px;">Black Thresholded</div><div class="abs" style="left:301px;top:7px;width:19px;height:19px;border-radius:3px;background:linear-gradient(135deg,#D99CA8,#B86474 55%,#B15B6C);border:1px solid #E6C9D2;"><svg class="abs" style="left:0;top:0" width="19" height="19"><path d="M5 5 L14 14 M14 5 L5 14" stroke="#EEF2FC" stroke-width="2.2" stroke-linecap="square"/></svg></div><div class="abs" style="left:278px;top:7px;width:19px;height:19px;border-radius:3px;background:linear-gradient(135deg,#7F9FEA,#5877D6 60%,#6A89E0);border:1px solid #C3D1F3;"><svg class="abs" style="left:0;top:0" width="19" height="19"><rect x="4.5" y="5.5" width="10" height="9" fill="none" stroke="#EEF2FC" stroke-width="1.2"/><rect x="4" y="4" width="11" height="3" fill="#EEF2FC"/></svg></div><div class="abs" style="left:255px;top:7px;width:19px;height:19px;border-radius:3px;background:linear-gradient(135deg,#7F9FEA,#5877D6 60%,#6A89E0);border:1px solid #C3D1F3;"><svg class="abs" style="left:0;top:0" width="19" height="19"><rect x="4" y="12" width="7" height="3" fill="#EEF2FC"/></svg></div><div class="abs" style="left:4px;top:30px;width:319px;height:239px;background:#000;"><svg class="abs" style="left:0;top:0" width="319" height="239" viewBox="0 0 319 239" shape-rendering="crispEdges"><polygon points="189.5,39.4 196.1,33.9 196.8,26.6 205.9,23.0 215.0,21.1 223.0,24.1 229.6,30.2 236.9,41.2 237.6,52.1 235.4,62.0 231.4,72.2 225.9,68.5 220.5,62.0 213.2,56.9 207.7,52.1 200.4,43.7" fill="#FF0000"/><polygon points="212.1,31.3 217.9,31.3 217.9,41.2 212.1,41.2" fill="#000"/><polygon points="224.9,55.0 230.0,55.0 230.0,60.5 224.9,60.5" fill="#000"/><polygon points="169.8,69.6 173.8,74.0 174.2,88.9 171.3,80.2" fill="#FF0000"/><polygon points="85.6,108.6 91.1,107.1 100.2,109.0 113.0,113.0 111.5,117.0 102.0,112.2" fill="#FF0000"/><polygon points="124.6,125.7 129.4,124.3 134.1,125.7 138.5,129.4 130.5,127.9 125.0,130.1" fill="#FF0000"/><polygon points="143.2,143.9 151.2,150.5 161.1,161.4 173.8,177.1 166.9,171.3 156.7,161.4 147.6,150.5" fill="#FF0000"/></svg></div></div>
<div class="abs" style="left:341px;top:399px;width:326px;height:272px;background:#7388DC;border-radius:8px 8px 0 0;overflow:hidden;"><div class="abs" style="left:0;top:0;width:326px;height:30px;background:linear-gradient(to bottom,#7B97E0 0%,#98B0EA 10%,#7E9AE2 30%,#7A96DF 70%,#7F9BE3 100%);"></div><div class="abs" style="left:25.5px;top:0;height:34px;line-height:34px;color:#D8E4F8;font-weight:bold;font-size:13px;text-shadow:none;white-space:nowrap;letter-spacing:-0.15px;">Red Thresholded</div><div class="abs" style="left:300px;top:7px;width:19px;height:19px;border-radius:3px;background:linear-gradient(135deg,#D99CA8,#B86474 55%,#B15B6C);border:1px solid #E6C9D2;"><svg class="abs" style="left:0;top:0" width="19" height="19"><path d="M5 5 L14 14 M14 5 L5 14" stroke="#EEF2FC" stroke-width="2.2" stroke-linecap="square"/></svg></div><div class="abs" style="left:277px;top:7px;width:19px;height:19px;border-radius:3px;background:linear-gradient(135deg,#7F9FEA,#5877D6 60%,#6A89E0);border:1px solid #C3D1F3;"><svg class="abs" style="left:0;top:0" width="19" height="19"><rect x="4.5" y="5.5" width="10" height="9" fill="none" stroke="#EEF2FC" stroke-width="1.2"/><rect x="4" y="4" width="11" height="3" fill="#EEF2FC"/></svg></div><div class="abs" style="left:254px;top:7px;width:19px;height:19px;border-radius:3px;background:linear-gradient(135deg,#7F9FEA,#5877D6 60%,#6A89E0);border:1px solid #C3D1F3;"><svg class="abs" style="left:0;top:0" width="19" height="19"><rect x="4" y="12" width="7" height="3" fill="#EEF2FC"/></svg></div><div class="abs" style="left:4px;top:30px;width:319px;height:238px;background:#000;"><svg class="abs" style="left:0;top:0" width="319" height="238" viewBox="0 0 319 238" shape-rendering="crispEdges"><polygon points="43.8,63.7 49.2,51.7 56.4,40.9 67.3,28.9 80.0,17.4 89.7,13.0 99.9,11.9 107.8,17.4 112.5,24.6 114.7,33.7 113.6,44.5 107.8,60.1 101.7,73.5 89.7,78.9 80.0,82.1 69.1,78.9 58.3,74.5 48.5,69.1" fill="#FF0000"/><polygon points="163.2,23.9 175.9,24.6 192.1,23.2 206.6,21.7 219.3,20.3 228.3,25.3 233.8,34.7 239.5,45.6 238.1,57.2 236.6,69.8 228.3,74.5 219.3,70.9 208.4,61.5 192.1,49.2 175.9,37.3" fill="#FF0000"/><polygon points="167.9,61.5 177.7,55.7 184.9,53.6 192.1,57.2 199.4,64.4 208.4,73.5 219.3,81.1 215.7,87.9 206.6,94.1 192.1,98.8 175.9,101.3 172.2,89.7 169.3,75.3" fill="#FF0000"/><polygon points="241.0,144.0 243.9,135.0 250.0,127.7 260.9,122.3 271.7,120.9 282.6,121.6 288.8,125.9 289.8,135.0 287.3,147.6 286.6,162.1 284.4,180.2 279.0,187.4 271.7,191.8 264.5,191.1 256.2,183.8 248.2,174.8 242.4,163.9" fill="#FF0000"/><polygon points="59.3,113.3 63.7,110.7 81.8,108.6 92.6,104.9 103.5,108.6 119.8,113.3 139.7,118.0 152.3,120.9 159.6,133.9 146.9,139.7 146.2,145.8 154.1,154.9 166.8,167.5 177.7,180.2 181.3,192.9 180.2,207.3 175.9,221.8 165.0,220.0 157.8,224.7 139.7,222.9 118.0,224.7 103.5,216.4 100.6,205.5 102.8,183.8 90.8,180.2 85.4,169.3 76.3,151.2 67.3,133.2 60.8,122.3" fill="#FF0000"/><rect x="168" y="213" width="7" height="9" fill="#000"/></svg></div></div>
<div class="abs" style="left:674px;top:402px;width:327px;height:272px;background:#0A3FD0;border-radius:8px 8px 0 0;overflow:hidden;"><div class="abs" style="left:0;top:0;width:327px;height:30px;background:linear-gradient(to bottom,#0A5FE6 0%,#2E7BF5 8%,#0A5EE8 22%,#0354DE 60%,#0457E2 85%,#0348C8 100%);"></div><div class="abs" style="left:26px;top:0;height:34px;line-height:34px;color:#FFFFFF;font-weight:bold;font-size:13px;text-shadow:1px 1px 0 #0A246A;white-space:nowrap;letter-spacing:-0.15px;">Yellow Thresholded</div><div class="abs" style="left:301px;top:7px;width:19px;height:19px;border-radius:3px;background:linear-gradient(135deg,#EC8A6C,#D0401C 55%,#C23A18);border:1px solid #FFFFFF;"><svg class="abs" style="left:0;top:0" width="19" height="19"><path d="M5 5 L14 14 M14 5 L5 14" stroke="#FFFFFF" stroke-width="2.2" stroke-linecap="square"/></svg></div><div class="abs" style="left:278px;top:7px;width:19px;height:19px;border-radius:3px;background:linear-gradient(135deg,#4E8BF4,#1C58E0 60%,#2D6CEB);border:1px solid #FFFFFF;"><svg class="abs" style="left:0;top:0" width="19" height="19"><rect x="4.5" y="5.5" width="10" height="9" fill="none" stroke="#FFFFFF" stroke-width="1.2"/><rect x="4" y="4" width="11" height="3" fill="#FFFFFF"/></svg></div><div class="abs" style="left:255px;top:7px;width:19px;height:19px;border-radius:3px;background:linear-gradient(135deg,#4E8BF4,#1C58E0 60%,#2D6CEB);border:1px solid #FFFFFF;"><svg class="abs" style="left:0;top:0" width="19" height="19"><rect x="4" y="12" width="7" height="3" fill="#FFFFFF"/></svg></div><div class="abs" style="left:4px;top:30px;width:319px;height:238px;background:#000;"><svg class="abs" style="left:0;top:0" width="319" height="238" viewBox="0 0 319 238" shape-rendering="crispEdges"><polygon points="171.6,68.1 174.2,61.6 178.6,59.0 180.8,54.7 185.1,58.3 190.6,59.0 193.1,64.5 200.4,70.0 207.0,79.8 212.5,83.5 218.7,82.7 217.9,88.2 212.5,93.7 203.3,97.3 190.6,100.9 181.5,98.8 176.0,94.4 174.9,88.2 177.1,75.4" fill="#FF0000"/><polygon points="181.5,68.5 189.1,68.5 189.1,77.3 181.5,77.3" fill="#000"/></svg></div></div>
</body></html>
